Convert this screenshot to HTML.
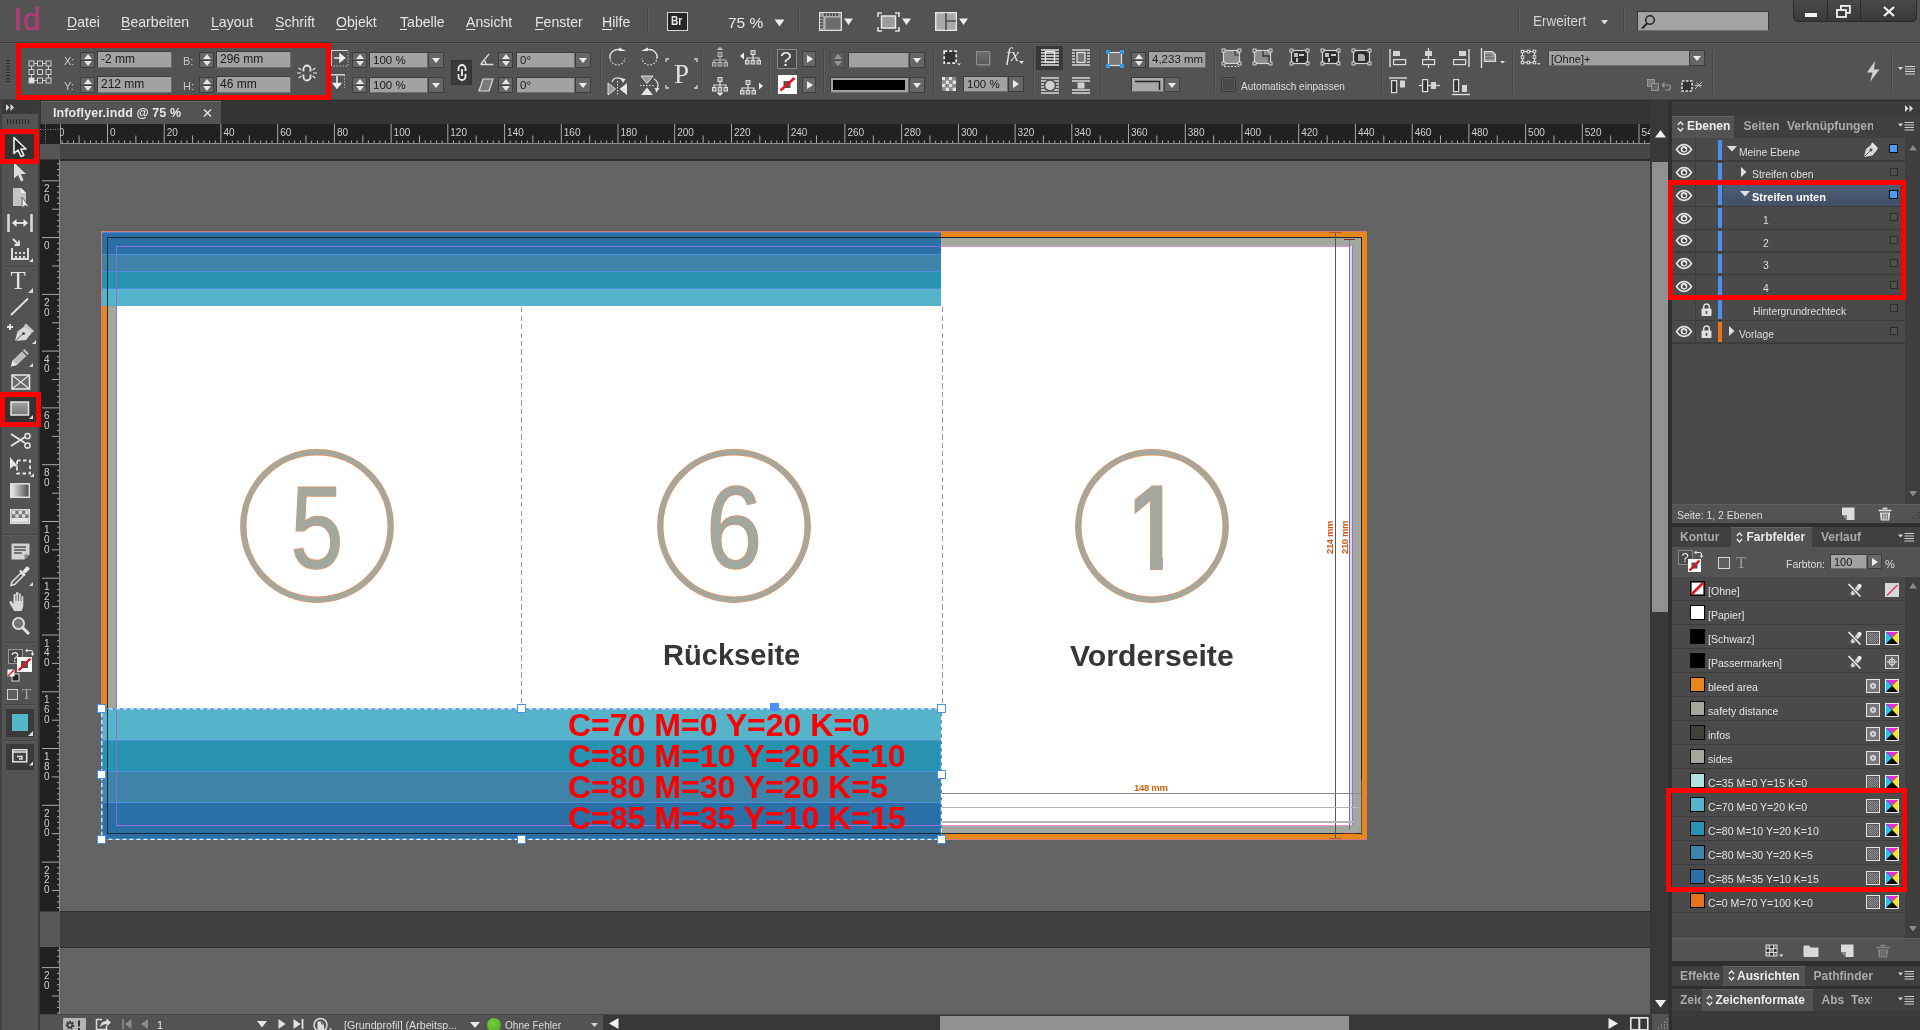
<!DOCTYPE html>
<html lang="de"><head><meta charset="utf-8"><title>Infoflyer.indd @ 75 %</title>
<style>
*{box-sizing:border-box;margin:0;padding:0}
html,body{width:1920px;height:1030px;overflow:hidden;background:#535353}
body{position:relative;will-change:transform;font-family:"Liberation Sans",sans-serif;font-size:11px;color:#dcdcdc}
.a{position:absolute}
.t{position:absolute;white-space:nowrap;line-height:1}
svg{position:absolute;overflow:visible}
.fld{position:absolute;background:#a2a2a2;border:1px solid #3c3c3c;border-right-color:#6a6a6a;border-bottom-color:#6e6e6e;color:#1a1a1a;font-size:12px;line-height:1;white-space:nowrap;overflow:hidden}
.fld span{position:absolute;left:3px;top:1px}
.spin{position:absolute;width:15px;height:16px;background:#666;border:1px solid #3e3e3e}
.spin:before{content:"";position:absolute;left:3px;top:1px;border:4px solid transparent;border-top:0;border-bottom:5px solid #e6e6e6}
.spin:after{content:"";position:absolute;left:3px;bottom:1px;border:4px solid transparent;border-bottom:0;border-top:5px solid #e6e6e6}
.spin i{position:absolute;left:0;right:0;top:6.5px;height:1px;background:#444}
.dd{position:absolute;width:16px;height:16px;background:#666;border:1px solid #3e3e3e}
.dd:after{content:"";position:absolute;left:3px;top:5px;border:4px solid transparent;border-bottom:0;border-top:5px solid #ececec}
.pl{position:absolute;width:14px;height:16px;background:#666;border:1px solid #3e3e3e}
.pl:after{content:"";position:absolute;left:4px;top:3px;border:4px solid transparent;border-right:0;border-left:6px solid #ececec}
.vsep{position:absolute;width:2px;background:linear-gradient(90deg,#474747 50%,#5e5e5e 50%)}
.red{position:absolute;border:5.5px solid #ff0000;z-index:50}
.lbl{position:absolute;font-size:11px;color:#c8c8c8;line-height:1;white-space:nowrap}
</style></head><body>

<div class="a" style="left:0;top:0;width:1920px;height:43px;background:#535353"></div>
<div class="a" style="left:0;top:42px;width:1920px;height:1px;background:#3f3f3f"></div>
<div class="a" style="left:0;top:43px;width:1920px;height:1px;background:#5c5c5c"></div>
<div class="t" style="left:13.5px;top:3px;font-size:32px;color:#a83f75;-webkit-text-stroke:.9px #a83f75;letter-spacing:.5px;transform:scaleX(1);transform-origin:0 0">Id</div>
<div class="t" style="left:67px;top:14px;font-size:15px;color:#e4e4e4;transform:scaleX(.94);transform-origin:0 0"><span style="text-decoration:underline;text-underline-offset:2px">D</span>atei</div>
<div class="t" style="left:121px;top:14px;font-size:15px;color:#e4e4e4;transform:scaleX(.94);transform-origin:0 0"><span style="text-decoration:underline;text-underline-offset:2px">B</span>earbeiten</div>
<div class="t" style="left:211px;top:14px;font-size:15px;color:#e4e4e4;transform:scaleX(.94);transform-origin:0 0"><span style="text-decoration:underline;text-underline-offset:2px">L</span>ayout</div>
<div class="t" style="left:275px;top:14px;font-size:15px;color:#e4e4e4;transform:scaleX(.94);transform-origin:0 0"><span style="text-decoration:underline;text-underline-offset:2px">S</span>chrift</div>
<div class="t" style="left:336px;top:14px;font-size:15px;color:#e4e4e4;transform:scaleX(.94);transform-origin:0 0"><span style="text-decoration:underline;text-underline-offset:2px">O</span>bjekt</div>
<div class="t" style="left:400px;top:14px;font-size:15px;color:#e4e4e4;transform:scaleX(.94);transform-origin:0 0"><span style="text-decoration:underline;text-underline-offset:2px">T</span>abelle</div>
<div class="t" style="left:466px;top:14px;font-size:15px;color:#e4e4e4;transform:scaleX(.94);transform-origin:0 0"><span style="text-decoration:underline;text-underline-offset:2px">A</span>nsicht</div>
<div class="t" style="left:535px;top:14px;font-size:15px;color:#e4e4e4;transform:scaleX(.94);transform-origin:0 0"><span style="text-decoration:underline;text-underline-offset:2px">F</span>enster</div>
<div class="t" style="left:602px;top:14px;font-size:15px;color:#e4e4e4;transform:scaleX(.94);transform-origin:0 0"><span style="text-decoration:underline;text-underline-offset:2px">H</span>ilfe</div>
<div class="vsep" style="left:647px;top:8px;height:26px"></div>
<div class="a" style="left:667px;top:12px;width:21px;height:19px;border:1.5px solid #d8d8d8;background:#262626"></div>
<div class="t" style="left:670.5px;top:15px;font-size:12px;font-weight:bold;color:#e8e8e8;transform:scaleX(.85);transform-origin:0 0">Br</div>
<div class="t" style="left:728px;top:15px;font-size:15.5px;color:#e8e8e8">75 %</div>
<svg style="left:774px;top:19px" width="11" height="8"><path d="M0.5 0.5h10l-5 7z" fill="#eee"/></svg>
<div class="vsep" style="left:798px;top:8px;height:25px"></div>
<svg style="left:819px;top:12px" width="36" height="20"><rect x=".5" y=".5" width="22" height="18" fill="#9a9a9a" stroke="#e2e2e2"/><rect x="6" y="5" width="16" height="13" fill="#6c6c6c" stroke="#cfcfcf" stroke-width=".8"/>
<path d="M6 1v3M9 1v3M12 1v3M15 1v3M18 1v3M1 6h3M1 9h3M1 12h3M1 15h3" stroke="#444" stroke-width="1.6"/><path d="M25 6.5h9l-4.5 6.5z" fill="#eee"/></svg>
<svg style="left:877px;top:12px" width="36" height="20"><path d="M1 5V1h4M18 1h4v4M22 15v4h-4M5 19H1v-4" fill="none" stroke="#e0e0e0" stroke-width="1.6"/><rect x="4.5" y="4" width="14" height="12" fill="#9c9c9c" stroke="#e8e8e8" stroke-width="1.5"/><path d="M25 6.5h9l-4.5 6.5z" fill="#eee"/></svg>
<svg style="left:935px;top:12px" width="36" height="20"><rect x=".7" y=".7" width="20.6" height="17.6" fill="#a8a8a8" stroke="#e4e4e4" stroke-width="1.4"/><path d="M11 1v17M11 9h10" stroke="#4a4a4a" stroke-width="1.6"/><path d="M24 6.5h9l-4.5 6.5z" fill="#eee"/></svg>
<div class="vsep" style="left:1518px;top:8px;height:26px"></div>
<div class="t" style="left:1533px;top:14px;font-size:14.5px;color:#d4d4d4;transform:scaleX(.93);transform-origin:0 0">Erweitert</div>
<svg style="left:1601px;top:20px" width="8" height="5"><path d="M0 0h7l-3.5 4.5z" fill="#ddd"/></svg>
<div class="vsep" style="left:1623px;top:8px;height:25px"></div>
<div class="a" style="left:1637px;top:11px;width:132px;height:20px;background:#a3a3a3;border:1px solid #3a3a3a;border-bottom-color:#707070"></div>
<svg style="left:1641px;top:14px" width="16" height="16"><circle cx="9" cy="6" r="4.3" fill="none" stroke="#222" stroke-width="1.5"/><path d="M6 9.5L1 14.5" stroke="#222" stroke-width="1.8"/></svg>
<div class="a" style="left:1793px;top:0;width:124px;height:22px;background:linear-gradient(#4a4a4a,#383838);border:1px solid #2c2c2c;border-top:0;border-radius:0 0 5px 5px"></div>
<div class="a" style="left:1827px;top:0;width:1px;height:21px;background:#2a2a2a"></div><div class="a" style="left:1860px;top:0;width:1px;height:21px;background:#2a2a2a"></div>
<div class="a" style="left:1805px;top:13px;width:12px;height:4px;background:#f2f2f2"></div>
<svg style="left:1836px;top:5px" width="16" height="14"><rect x="4.9" y=".9" width="9" height="7" fill="none" stroke="#f2f2f2" stroke-width="1.8"/><rect x="1" y="5" width="9" height="7" fill="#3c3c3c" stroke="#f2f2f2" stroke-width="1.8"/></svg>
<svg style="left:1883px;top:6px" width="13" height="11"><path d="M1 1l10 9M11 1L1 10" stroke="#f4f4f4" stroke-width="2.2"/></svg>
<div class="a" style="left:0;top:44px;width:1920px;height:56px;background:#535353"></div>
<div class="a" style="left:0;top:99px;width:1920px;height:1px;background:#464646"></div>
<div class="a" style="left:6px;top:60px;width:4px;height:24px;background:repeating-linear-gradient(#2e2e2e 0 1px,transparent 1px 3px)"></div>
<svg style="left:27.5px;top:59.5px" width="24" height="24"><rect x="1" y="1" width="5" height="5" fill="none" stroke="#cfcfcf" stroke-width="1"/><rect x="9.5" y="1" width="5" height="5" fill="none" stroke="#cfcfcf" stroke-width="1"/><rect x="18" y="1" width="5" height="5" fill="none" stroke="#cfcfcf" stroke-width="1"/><rect x="1" y="9.5" width="5" height="5" fill="none" stroke="#cfcfcf" stroke-width="1"/><rect x="9.5" y="9.5" width="5" height="5" fill="none" stroke="#cfcfcf" stroke-width="1"/><rect x="18" y="9.5" width="5" height="5" fill="none" stroke="#cfcfcf" stroke-width="1"/><rect x="1" y="18" width="5" height="5" fill="#e8e8e8" stroke="#cfcfcf" stroke-width="1"/><rect x="9.5" y="18" width="5" height="5" fill="none" stroke="#cfcfcf" stroke-width="1"/><rect x="18" y="18" width="5" height="5" fill="none" stroke="#cfcfcf" stroke-width="1"/><path d="M6 3.5h3.5M14.5 3.5h3.5M6 20.5h3.5M14.5 20.5h3.5M3.5 6v3.5M3.5 14.5v3.5M20.5 6v3.5M20.5 14.5v3.5" stroke="#cfcfcf"/></svg>
<div class="lbl" style="left:64px;top:56px">X:</div><div class="lbl" style="left:64px;top:81px">Y:</div>
<div class="spin" style="left:80px;top:52px"><i></i></div><div class="spin" style="left:80px;top:77px"><i></i></div>
<div class="fld" style="left:97px;top:51px;width:75px;height:17px"><span>-2 mm</span></div>
<div class="fld" style="left:97px;top:76px;width:75px;height:17px"><span>212 mm</span></div>
<div class="lbl" style="left:183px;top:56px">B:</div><div class="lbl" style="left:183px;top:81px">H:</div>
<div class="spin" style="left:199px;top:52px"><i></i></div><div class="spin" style="left:199px;top:77px"><i></i></div>
<div class="fld" style="left:216px;top:51px;width:75px;height:17px"><span>296 mm</span></div>
<div class="fld" style="left:216px;top:76px;width:75px;height:17px"><span>46 mm</span></div>
<svg style="left:296px;top:63px" width="22" height="20"><path d="M7.5 8.5V6a3.5 3.5 0 0 1 7 0v2.5M7.5 11.5V14a3.5 3.5 0 0 0 7 0v-2.5" fill="none" stroke="#e6e6e6" stroke-width="1.8"/><path d="M1 10h4M17 10h4M2.5 5l3 2M2.5 15l3-2M19.5 5l-3 2M19.5 15l-3-2" stroke="#e6e6e6" stroke-width="1.2"/></svg>
<div class="red" style="left:16px;top:42.5px;width:314.5px;height:57px"></div>
<svg style="left:331px;top:50px" width="18" height="17"><path d="M.5 16V.5H17" fill="none" stroke="#dcdcdc" stroke-width="1.2"/><path d="M17 2v14H1" fill="none" stroke="#bbb" stroke-dasharray="1.5 1.5"/><path d="M3 8h9M9 4.5l4.5 3.5l-4.5 3.5z" stroke="#eee" stroke-width="1.6" fill="#eee"/></svg>
<svg style="left:331px;top:74px" width="16" height="18"><path d="M0 .8h14" stroke="#dcdcdc" stroke-width="1.4"/><path d="M13.5 1v13" stroke="#aaa" stroke-dasharray="1.5 1.5"/><path d="M6 2v9M2.5 9.5l3.5 4.5l3.5-4.5z" stroke="#eee" stroke-width="1.6" fill="#eee"/></svg>
<div class="spin" style="left:352px;top:52px"><i></i></div>
<div class="fld" style="left:369px;top:52px;width:59px;height:16px"><span style="top:2px;font-size:11.5px">100 %</span></div>
<div class="dd" style="left:428px;top:52px"></div>
<div class="spin" style="left:352px;top:77px"><i></i></div>
<div class="fld" style="left:369px;top:77px;width:59px;height:16px"><span style="top:2px;font-size:11.5px">100 %</span></div>
<div class="dd" style="left:428px;top:77px"></div>
<div class="a" style="left:451px;top:60px;width:21px;height:25px;background:#3a3a3a;border:1px solid #333"></div>
<svg style="left:455px;top:63px" width="14" height="20"><path d="M3.5 8V5.5a3.5 3.5 0 0 1 7 0V8M3.5 11v2.5a3.5 3.5 0 0 0 7 0V11M7 6v7" fill="none" stroke="#f0f0f0" stroke-width="1.8"/></svg>
<svg style="left:480px;top:52px" width="14" height="14"><path d="M.5 12.5h13M1 12L9 2M6 12.5a5 5 0 0 0-1.8-4" fill="none" stroke="#ddd" stroke-width="1.3"/></svg>
<svg style="left:479px;top:78px" width="15" height="14"><path d="M4 1h10l-4 12H0z" fill="#7a7a7a" stroke="#ddd" stroke-width="1.2"/></svg>
<div class="spin" style="left:498px;top:52px"><i></i></div>
<div class="fld" style="left:516px;top:52px;width:59px;height:16px"><span style="top:2px;font-size:11.5px">0°</span></div>
<div class="dd" style="left:575px;top:52px"></div>
<div class="spin" style="left:498px;top:77px"><i></i></div>
<div class="fld" style="left:516px;top:77px;width:59px;height:16px"><span style="top:2px;font-size:11.5px">0°</span></div>
<div class="dd" style="left:575px;top:77px"></div>
<div class="vsep" style="left:600px;top:50px;height:43px"></div>
<svg style="left:608px;top:47px" width="20" height="20"><path d="M13 3.5A7.5 7.5 0 0 0 2.2 12" fill="none" stroke="#e0e0e0" stroke-width="1.4"/><path d="M2.5 13a7.5 7.5 0 0 0 14.5-2" fill="none" stroke="#cfcfcf" stroke-width="1.3" stroke-dasharray="1.6 1.6"/><path d="M11 .5l7 3.5h-7z" fill="#e8e8e8"/></svg>
<svg style="left:640px;top:47px" width="20" height="20"><path d="M6 3.5A7.5 7.5 0 0 1 16.8 12" fill="none" stroke="#e0e0e0" stroke-width="1.4"/><path d="M16.5 13a7.5 7.5 0 0 1-14.5-2" fill="none" stroke="#cfcfcf" stroke-width="1.3" stroke-dasharray="1.6 1.6"/><path d="M8 .5L1 4h7z" fill="#e8e8e8"/></svg>
<svg style="left:607px;top:75px" width="22" height="21"><path d="M1 8v12l7.5-6z" fill="#9a9a9a" stroke="#ddd"/><path d="M20 8v12l-7.5-6z" fill="#e4e4e4"/><path d="M10.5 6v14" stroke="#ddd" stroke-dasharray="1.5 1.5"/><path d="M5 7a6 6 0 0 1 11-1" fill="none" stroke="#ddd" stroke-width="1.3"/><path d="M13.5 3l5 1l-2.5 4z" fill="#e4e4e4"/></svg>
<svg style="left:640px;top:75px" width="21" height="21"><path d="M1 1h12l-6 7.5z" fill="#9a9a9a" stroke="#ddd"/><path d="M1 20h12l-6-7.5z" fill="#e4e4e4"/><path d="M0 10.5h14" stroke="#ddd" stroke-dasharray="1.5 1.5"/><path d="M14 4a7 7 0 0 1 3 10" fill="none" stroke="#ddd" stroke-width="1.3"/><path d="M14.5 13l5 0l-3 4.5z" fill="#e4e4e4"/></svg>
<svg style="left:665px;top:58px" width="33" height="31"><path d="M1 4V1h3M29 1h3v3M32 27v3h-3M4 30H1v-3" fill="none" stroke="#d6d6d6" stroke-width="1.3"/></svg>
<div class="t" style="left:674px;top:61px;font-family:'Liberation Serif',serif;font-size:27px;color:#dedede">P</div>
<div class="vsep" style="left:701px;top:50px;height:43px"></div>
<svg style="left:712px;top:47px" width="24" height="20"><path d="M8 0l3.5 3h-7z" fill="#bbb"/><g transform="translate(0,5)" opacity=".7"><path d="M8 4v4M2 11V8h12v3M8 8v3" fill="none" stroke="#ddd" stroke-width="1.2"/><rect x="6" y=".5" width="4" height="4" fill="#888" stroke="#ddd"/><rect x=".5" y="10.5" width="3.5" height="3.5" fill="#888" stroke="#ddd"/><rect x="6.2" y="10.5" width="3.5" height="3.5" fill="#888" stroke="#ddd"/><rect x="12" y="10.5" width="3.5" height="3.5" fill="#888" stroke="#ddd"/></g></svg>
<svg style="left:740px;top:49px" width="24" height="20"><path d="M0 7l4-3.5v7z" fill="#eee"/><g transform="translate(5,1)"><path d="M8 4v4M2 11V8h12v3M8 8v3" fill="none" stroke="#ddd" stroke-width="1.2"/><rect x="6" y=".5" width="4" height="4" fill="#888" stroke="#ddd"/><rect x=".5" y="10.5" width="3.5" height="3.5" fill="#888" stroke="#ddd"/><rect x="6.2" y="10.5" width="3.5" height="3.5" fill="#888" stroke="#ddd"/><rect x="12" y="10.5" width="3.5" height="3.5" fill="#888" stroke="#ddd"/></g></svg>
<svg style="left:712px;top:77px" width="24" height="20"><path d="M8 19l3.5-3.5h-7z" fill="#eee"/><g transform="translate(0,0)"><path d="M8 4v4M2 11V8h12v3M8 8v3" fill="none" stroke="#ddd" stroke-width="1.2"/><rect x="6" y=".5" width="4" height="4" fill="#888" stroke="#ddd"/><rect x=".5" y="10.5" width="3.5" height="3.5" fill="#888" stroke="#ddd"/><rect x="6.2" y="10.5" width="3.5" height="3.5" fill="#888" stroke="#ddd"/><rect x="12" y="10.5" width="3.5" height="3.5" fill="#888" stroke="#ddd"/></g></svg>
<svg style="left:740px;top:76px" width="24" height="20"><path d="M23 10l-4-3.5v7z" fill="#eee"/><g transform="translate(0,4)"><path d="M8 4v4M2 11V8h12v3M8 8v3" fill="none" stroke="#ddd" stroke-width="1.2"/><rect x="6" y=".5" width="4" height="4" fill="#888" stroke="#ddd"/><rect x=".5" y="10.5" width="3.5" height="3.5" fill="#888" stroke="#ddd"/><rect x="6.2" y="10.5" width="3.5" height="3.5" fill="#888" stroke="#ddd"/><rect x="12" y="10.5" width="3.5" height="3.5" fill="#888" stroke="#ddd"/></g></svg>
<div class="vsep" style="left:769px;top:50px;height:43px"></div>
<div class="a" style="left:777px;top:49px;width:20px;height:20px;border:1px solid #888;background:#4a4a4a"></div>
<div class="t" style="left:780px;top:48px;font-size:21px;color:#e8e8e8">?</div>
<svg style="left:777.5px;top:75px" width="19" height="19"><rect width="19" height="19" fill="#fff"/><rect x="5.5" y="6" width="7" height="7" fill="#555"/><path d="M2.5 15.5L16.5 3" stroke="#e8101c" stroke-width="2.4"/></svg>
<div class="pl" style="left:802px;top:51px"></div><div class="pl" style="left:802px;top:77px"></div>
<div class="vsep" style="left:823px;top:50px;height:43px"></div>
<div class="spin" style="left:830px;top:52px;opacity:.45"><i></i></div>
<div class="fld" style="left:848px;top:52px;width:61px;height:16px"></div><div class="dd" style="left:909px;top:52px"></div>
<div class="fld" style="left:830px;top:77px;width:79px;height:16px"><div class="a" style="left:2px;top:2px;right:3px;bottom:2px;background:#000"></div></div><div class="dd" style="left:909px;top:77px"></div>
<div class="vsep" style="left:933px;top:50px;height:43px"></div>
<svg style="left:943px;top:50px" width="18" height="16"><rect x="1.2" y="1.2" width="12" height="12" fill="#333" stroke="#e6e6e6" stroke-width="1.8" stroke-dasharray="3 2"/><path d="M14 13.5h4l-2 2z" fill="#ddd"/></svg>
<div class="a" style="left:976px;top:51px;width:14px;height:14px;background:linear-gradient(#6e6e6e,#585858);border:1.5px solid #8d8d8d;box-shadow:1px 1.5px 0 #6c6c6c"></div>
<div class="t" style="left:1006px;top:46px;font-size:18px;font-style:italic;color:#e0e0e0;font-family:'Liberation Serif',serif">fx</div><svg style="left:1019px;top:61px" width="5" height="3"><path d="M0 0h5l-2.5 3z" fill="#ddd"/></svg>
<svg style="left:942px;top:77px" width="14" height="14"><rect x="0" y="0" width="3.5" height="3.5" fill="#e0e0e0"/><rect x="3.5" y="0" width="3.5" height="3.5" fill="#8a8a8a"/><rect x="7" y="0" width="3.5" height="3.5" fill="#e0e0e0"/><rect x="10.5" y="0" width="3.5" height="3.5" fill="#8a8a8a"/><rect x="0" y="3.5" width="3.5" height="3.5" fill="#8a8a8a"/><rect x="3.5" y="3.5" width="3.5" height="3.5" fill="#e0e0e0"/><rect x="7" y="3.5" width="3.5" height="3.5" fill="#8a8a8a"/><rect x="10.5" y="3.5" width="3.5" height="3.5" fill="#e0e0e0"/><rect x="0" y="7" width="3.5" height="3.5" fill="#e0e0e0"/><rect x="3.5" y="7" width="3.5" height="3.5" fill="#8a8a8a"/><rect x="7" y="7" width="3.5" height="3.5" fill="#e0e0e0"/><rect x="10.5" y="7" width="3.5" height="3.5" fill="#8a8a8a"/><rect x="0" y="10.5" width="3.5" height="3.5" fill="#8a8a8a"/><rect x="3.5" y="10.5" width="3.5" height="3.5" fill="#e0e0e0"/><rect x="7" y="10.5" width="3.5" height="3.5" fill="#8a8a8a"/><rect x="10.5" y="10.5" width="3.5" height="3.5" fill="#e0e0e0"/></svg>
<div class="fld" style="left:963px;top:76px;width:45px;height:16px"><span style="top:2px;font-size:11.5px">100 %</span></div><div class="pl" style="left:1008px;top:76px;width:16px"></div>
<div class="vsep" style="left:1033px;top:50px;height:43px"></div>
<div class="a" style="left:1036px;top:46px;width:27px;height:24px;background:#383838"></div>
<svg style="left:1041px;top:49px" width="18" height="17"><path d="M0 1h18M0 4h18M0 7h18M0 10h18M0 13h18M0 16h18" stroke="#e4e4e4" stroke-width="1.3"/><rect x="4.5" y="2.5" width="9" height="11" fill="none" stroke="#e4e4e4" stroke-width="1.3"/></svg>
<svg style="left:1072px;top:49px" width="18" height="17"><path d="M0 1h18M0 4h3M15 4h3M0 7h3M15 7h3M0 10h3M15 10h3M0 13h3M15 13h3M0 16h18" stroke="#d8d8d8" stroke-width="1.3"/><rect x="5" y="3.5" width="8" height="10" fill="#777" stroke="#e4e4e4" stroke-width="1.3"/></svg>
<svg style="left:1041px;top:77px" width="18" height="17"><path d="M0 1h18M0 4h18M0 7h18M0 10h18M0 13h18M0 16h18" stroke="#d8d8d8" stroke-width="1.3"/><circle cx="9" cy="8.5" r="5.5" fill="#d0d0d0" stroke="#535353" stroke-width="1.5"/></svg>
<svg style="left:1072px;top:77px" width="18" height="17"><path d="M0 1h18M0 4h18M0 13h18M0 16h18" stroke="#d8d8d8" stroke-width="1.3"/><rect x="5.5" y="5.5" width="7" height="6" fill="#d0d0d0"/></svg>
<div class="vsep" style="left:1100px;top:50px;height:43px"></div>
<svg style="left:1106px;top:50px" width="18" height="18"><rect x="2.5" y="2.5" width="13" height="13" fill="#7a7a7a" stroke="#e0e0e0" stroke-width="1.2"/><rect x="0" y="0" width="4" height="4" fill="#2f9be8"/><rect x="14" y="0" width="4" height="4" fill="#2f9be8"/><rect x="0" y="14" width="4" height="4" fill="#2f9be8"/><rect x="14" y="14" width="4" height="4" fill="#2f9be8"/></svg>
<div class="spin" style="left:1131px;top:52px"><i></i></div>
<div class="fld" style="left:1148px;top:51px;width:58px;height:17px"><span style="top:2px;font-size:11.5px">4,233 mm</span></div>
<div class="fld" style="left:1131px;top:77px;width:33px;height:15px;background:#a8a8a8"><svg style="left:3px;top:2px" width="26" height="10"><path d="M0 1.5h24.5V10" fill="none" stroke="#222" stroke-width="1.5"/></svg></div><div class="dd" style="left:1164px;top:77px;height:15px"></div>
<div class="vsep" style="left:1214px;top:50px;height:43px"></div>
<svg style="left:1222px;top:49px" width="21" height="19"><rect x="1.5" y="1.5" width="16" height="13" fill="#8c8c8c" stroke="#d6d6d6" stroke-width="1.2"/><rect x="0" y="0" width="3" height="3" fill="#535353" stroke="#ddd" stroke-width=".9"/><rect x="16" y="0" width="3" height="3" fill="#535353" stroke="#ddd" stroke-width=".9"/><rect x="0" y="13" width="3" height="3" fill="#535353" stroke="#ddd" stroke-width=".9"/><rect x="16" y="13" width="3" height="3" fill="#535353" stroke="#ddd" stroke-width=".9"/><path d="M2 17.5h15" stroke="#ddd" stroke-dasharray="2 1.5"/><path d="M13 2v4h4" fill="none" stroke="#333" stroke-width="1.2"/></svg>
<svg style="left:1253px;top:49px" width="21" height="19"><rect x="1.5" y="1.5" width="16" height="13" fill="#8c8c8c" stroke="#d6d6d6" stroke-width="1.2"/><rect x="0" y="0" width="3" height="3" fill="#535353" stroke="#ddd" stroke-width=".9"/><rect x="16" y="0" width="3" height="3" fill="#535353" stroke="#ddd" stroke-width=".9"/><rect x="0" y="13" width="3" height="3" fill="#535353" stroke="#ddd" stroke-width=".9"/><rect x="16" y="13" width="3" height="3" fill="#535353" stroke="#ddd" stroke-width=".9"/><path d="M10 2v5h6v7" fill="none" stroke="#333" stroke-width="1.3"/></svg>
<svg style="left:1290px;top:49px" width="21" height="19"><rect x="1.5" y="1.5" width="16" height="13" fill="#2c2c2c" stroke="#d6d6d6" stroke-width="1.2"/><rect x="0" y="0" width="3" height="3" fill="#535353" stroke="#ddd" stroke-width=".9"/><rect x="16" y="0" width="3" height="3" fill="#535353" stroke="#ddd" stroke-width=".9"/><rect x="0" y="13" width="3" height="3" fill="#535353" stroke="#ddd" stroke-width=".9"/><rect x="16" y="13" width="3" height="3" fill="#535353" stroke="#ddd" stroke-width=".9"/><rect x="4" y="4" width="4" height="4" fill="#bbb"/><path d="M9 6h5M7 9v4" stroke="#fff" stroke-width="1.4"/></svg>
<svg style="left:1321px;top:49px" width="21" height="19"><rect x="1.5" y="1.5" width="16" height="13" fill="#2c2c2c" stroke="#d6d6d6" stroke-width="1.2"/><rect x="0" y="0" width="3" height="3" fill="#535353" stroke="#ddd" stroke-width=".9"/><rect x="16" y="0" width="3" height="3" fill="#535353" stroke="#ddd" stroke-width=".9"/><rect x="0" y="13" width="3" height="3" fill="#535353" stroke="#ddd" stroke-width=".9"/><rect x="16" y="13" width="3" height="3" fill="#535353" stroke="#ddd" stroke-width=".9"/><rect x="4" y="4" width="4" height="4" fill="#bbb"/><path d="M10 6h5M8 9v4" stroke="#fff" stroke-width="1.4"/></svg>
<svg style="left:1352px;top:49px" width="21" height="19"><rect x="1.5" y="1.5" width="16" height="13" fill="#2c2c2c" stroke="#d6d6d6" stroke-width="1.2"/><rect x="0" y="0" width="3" height="3" fill="#535353" stroke="#ddd" stroke-width=".9"/><rect x="16" y="0" width="3" height="3" fill="#535353" stroke="#ddd" stroke-width=".9"/><rect x="0" y="13" width="3" height="3" fill="#535353" stroke="#ddd" stroke-width=".9"/><rect x="16" y="13" width="3" height="3" fill="#535353" stroke="#ddd" stroke-width=".9"/><path d="M6 5h5l2 2v5H6z" fill="#aaa"/></svg>
<div class="a" style="left:1221px;top:77px;width:15px;height:15px;background:#4a4a4a;border:1px solid #3a3a3a;border-radius:2px;box-shadow:inset 0 0 0 1px #5a5a5a"></div>
<div class="t" style="left:1241px;top:81px;font-size:11.3px;color:#dcdcdc;transform:scaleX(.89);transform-origin:0 0">Automatisch einpassen</div>
<div class="vsep" style="left:1381px;top:50px;height:43px"></div>
<svg style="left:1389px;top:49px" width="18" height="18"><path d="M1 0v18" stroke="#ddd" stroke-width="1.4"/><rect x="4" y="2" width="7" height="5" fill="#d4d4d4"/><rect x="4.6" y="10.6" width="12" height="5" fill="none" stroke="#ddd" stroke-width="1.2"/></svg>
<svg style="left:1421px;top:48px" width="16" height="20"><path d="M7.5 0v20" stroke="#ddd" stroke-width="1.2"/><rect x="4" y="3" width="7" height="5" fill="#d4d4d4"/><rect x="1.6" y="11.6" width="12" height="5" fill="#535353" stroke="#ddd" stroke-width="1.2"/></svg>
<svg style="left:1452px;top:49px" width="18" height="18"><path d="M17 0v18" stroke="#ddd" stroke-width="1.4"/><rect x="7" y="2" width="7" height="5" fill="#d4d4d4"/><rect x="1.6" y="10.6" width="12" height="5" fill="none" stroke="#ddd" stroke-width="1.2"/></svg>
<svg style="left:1480px;top:48px" width="28" height="20"><path d="M1.5 0v20" stroke="#ddd" stroke-width="1.4"/><path d="M4.5 3.5h8l3 3v7h-11z" fill="#9a9a9a" stroke="#ddd" stroke-width="1.2"/><path d="M5 7h7M5 10h9" stroke="#535353" stroke-width="1.2"/><path d="M20 13h5l-2.5 2.5z" fill="#e4e4e4"/></svg>
<svg style="left:1389px;top:77px" width="18" height="18"><path d="M0 1h18" stroke="#ddd" stroke-width="1.4"/><rect x="2.6" y="3.6" width="5" height="12" fill="#333" stroke="#ddd" stroke-width="1.2"/><rect x="11" y="3.5" width="5" height="7" fill="#d4d4d4"/></svg>
<svg style="left:1419px;top:78px" width="21" height="16"><path d="M0 7.5h21" stroke="#ddd" stroke-width="1.2"/><rect x="3.6" y="1.6" width="5" height="12" fill="#333" stroke="#ddd" stroke-width="1.2"/><rect x="12" y="4" width="5" height="7" fill="#d4d4d4"/></svg>
<svg style="left:1452px;top:77px" width="18" height="19"><path d="M0 17.5h18" stroke="#ddd" stroke-width="1.4"/><rect x="1.6" y="2.6" width="5" height="12" fill="#333" stroke="#ddd" stroke-width="1.2"/><rect x="10" y="8" width="5" height="7" fill="#d4d4d4"/></svg>
<div class="vsep" style="left:1512px;top:50px;height:43px"></div>
<svg style="left:1521px;top:50px" width="20" height="16"><rect x="0.19999999999999996" y="0.19999999999999996" width="2.6" height="2.6" fill="none" stroke="#e4e4e4" stroke-width=".9"/><rect x="6.2" y="0.19999999999999996" width="2.6" height="2.6" fill="none" stroke="#e4e4e4" stroke-width=".9"/><rect x="12.2" y="0.19999999999999996" width="2.6" height="2.6" fill="none" stroke="#e4e4e4" stroke-width=".9"/><rect x="0.19999999999999996" y="5.7" width="2.6" height="2.6" fill="none" stroke="#e4e4e4" stroke-width=".9"/><rect x="12.2" y="5.7" width="2.6" height="2.6" fill="none" stroke="#e4e4e4" stroke-width=".9"/><rect x="0.19999999999999996" y="11.2" width="2.6" height="2.6" fill="none" stroke="#e4e4e4" stroke-width=".9"/><rect x="6.2" y="11.2" width="2.6" height="2.6" fill="none" stroke="#e4e4e4" stroke-width=".9"/><rect x="12.2" y="11.2" width="2.6" height="2.6" fill="none" stroke="#e4e4e4" stroke-width=".9"/><path d="M3 1.5h3M9 1.5h3M3 12.5h3M9 12.5h3M1.5 3v2.5M1.5 8.5V11M13.5 3v2.5M13.5 8.5V11" stroke="#e4e4e4" stroke-width=".9"/><path d="M16 13h3.5l-1.7 2z" fill="#ddd"/></svg>
<div class="fld" style="left:1548px;top:50px;width:142px;height:16px;border-color:#4a4a4a #a2a2a2 #707070 #4a4a4a"><span style="top:2.5px;font-size:11px;left:2px">[Ohne]+</span></div><div class="dd" style="left:1689px;top:50px"></div>
<div class="vsep" style="left:1712px;top:50px;height:43px"></div>
<svg style="left:1647px;top:79px" width="26" height="14" opacity=".55"><rect x=".5" y=".5" width="7" height="7" fill="#999" stroke="#ccc"/><rect x="4.5" y="4.5" width="7" height="7" fill="#777" stroke="#ccc"/><path d="M15 6h6a2.5 2.5 0 0 1 0 5h-3M17.5 3.5L15 6l2.5 2.5" fill="none" stroke="#ccc" stroke-width="1.2"/></svg>
<svg style="left:1681px;top:80px" width="24" height="13"><rect x="1" y="1" width="10" height="10" fill="#333" stroke="#e0e0e0" stroke-width="1.6" stroke-dasharray="2.5 1.5"/><path d="M14 9l7-7M15.5 2.5l4 5M14 5.5h7" stroke="#bbb" stroke-width="1"/></svg>
<svg style="left:1866px;top:61px" width="15" height="22"><path d="M9 0L1 11.5h5.5L4 21l9.5-12.5H8z" fill="#cfcfcf"/></svg>
<div class="vsep" style="left:1891px;top:50px;height:43px"></div>
<svg style="left:1898px;top:66px" width="18" height="9"><path d="M0 1h5l-2.5 3z" fill="#ddd"/><path d="M7 .5h10M7 3h10M7 5.5h10M7 8h10" stroke="#d8d8d8" stroke-width="1.1"/></svg>
<div class="a" style="left:0;top:100px;width:1672px;height:24px;background:#353535"></div>
<div class="a" style="left:0;top:100px;width:1672px;height:1px;background:#2e2e2e"></div>
<div class="a" style="left:41px;top:101px;width:181px;height:23px;background:#535353;border-top:1px solid #676767;border-right:1px solid #303030"></div>
<div class="t" style="left:53px;top:106.5px;font-size:12.5px;font-weight:bold;color:#e6e6e6;letter-spacing:.1px">Infoflyer.indd @ 75 %</div>
<svg style="left:203px;top:109px" width="9" height="8"><path d="M1 .5l7 7M8 .5l-7 7" stroke="#e0e0e0" stroke-width="1.5"/></svg>
<div class="a" style="left:0;top:100px;width:40px;height:930px;background:#535353"></div>
<div class="a" style="left:0;top:100px;width:40px;height:14px;background:#3a3a3a"></div>
<div class="a" style="left:38px;top:100px;width:2px;height:930px;background:#3c3c3c"></div>
<div class="a" style="left:0;top:100px;width:2px;height:930px;background:#424242"></div>
<svg style="left:6px;top:104px" width="9" height="7"><path d="M0 0l3.5 3.5L0 7zM4.5 0L8 3.5L4.5 7z" fill="#dcdcdc"/></svg>
<div class="a" style="left:7px;top:119px;width:24px;height:5px;background:repeating-linear-gradient(90deg,#2c2c2c 0 1px,transparent 1px 3px)"></div>
<div class="a" style="left:4px;top:134px;width:31px;height:25px;background:#333"></div>
<div class="a" style="left:4px;top:396px;width:32px;height:26px;background:#333"></div>
<svg style="left:12px;top:136px" width="16" height="22"><path d="M2 1.5v16l4-3.5l3 6.5l2.8-1.3L8.8 13H14z" fill="#2a2a2a" stroke="#f0f0f0" stroke-width="1.6" stroke-linejoin="round"/></svg>
<svg style="left:13px;top:162px" width="15" height="21"><path d="M1 .5v16l4-3.5l3 6.5l2.6-1.2L7.8 12H13z" fill="#dcdcdc"/></svg>
<svg style="left:12px;top:187px" width="18" height="22"><path d="M1 1h8l5 5v13H1z" fill="#c4c4c4"/><path d="M9 1v5h5z" fill="#eee"/><path d="M10 10v11l3-2.5l4 1.5z" fill="#e8e8e8" stroke="#535353" stroke-width=".8"/></svg>
<svg style="left:7px;top:214px" width="26" height="18"><path d="M1.5 0v18M24.5 0v18" stroke="#d8d8d8" stroke-width="2.6"/><path d="M7 9h12" stroke="#e8e8e8" stroke-width="1.8"/><path d="M9.5 5L5 9l4.5 4zM16.5 5L21 9l-4.5 4z" fill="#e8e8e8"/></svg>
<svg style="left:10px;top:238px" width="24" height="25"><path d="M3 1l6 6M9 2.5V7H4.5" fill="none" stroke="#e4e4e4" stroke-width="1.8"/><path d="M2 10v11h16V10" fill="none" stroke="#dcdcdc" stroke-width="2"/><path d="M5 14h2v2H5zM9 14h2v2H9zM13 14h2v2h-2zM5 18h2v2H5zM9 18h2v2H9zM13 18h2v2h-2z" fill="#dcdcdc"/><path d="M23 20v4h-4z" fill="#dcdcdc"/></svg>
<div class="a" style="left:4px;top:266px;width:32px;height:1px;background:#444"></div><div class="a" style="left:4px;top:267px;width:32px;height:1px;background:#5d5d5d"></div>
<div class="t" style="left:10.5px;top:268px;font-family:'Liberation Serif',serif;font-size:25px;color:#e2e2e2">T</div><svg style="left:28px;top:288px" width="5" height="5"><path d="M5 0v5H0z" fill="#dcdcdc"/></svg>
<svg style="left:10px;top:297px" width="20" height="20"><path d="M1 18L18 1.5" stroke="#e4e4e4" stroke-width="1.8"/></svg>
<svg style="left:6px;top:321px" width="30" height="24"><path d="M1 6h6M4 3v6" stroke="#e8e8e8" stroke-width="1.8"/><path d="M9 20l2.5-9.5L19 5l7 6.5l-6 7.5z" fill="#d8d8d8"/><path d="M20 2.5l8 7.5-2 2-8-7.5z" fill="#c8c8c8"/><circle cx="17.5" cy="12.5" r="1.6" fill="#535353"/><path d="M9.5 20l7-7" stroke="#535353" stroke-width="1"/><path d="M33 19v4h-4z" fill="#dcdcdc" transform="translate(-3,0)"/></svg>
<svg style="left:9px;top:347px" width="26" height="22"><path d="M2 19.5l1.5-6L15.5 2l4.5 4.5L8 18z" fill="#bdbdbd"/><path d="M2 19.5l1.5-6l4.5 4.5z" fill="#e8e8e8"/><path d="M13.5 4l4.5 4.5" stroke="#535353" stroke-width="1.2"/><path d="M24 16v4h-4z" fill="#dcdcdc"/></svg>
<svg style="left:10.5px;top:374px" width="20" height="17"><rect x="1" y="1" width="17.5" height="14" fill="#6a6a6a" stroke="#e2e2e2" stroke-width="1.6"/><path d="M1 1l17.5 14M18.5 1L1 15" stroke="#e2e2e2" stroke-width="1.2"/></svg>
<svg style="left:10px;top:401px" width="24" height="20"><defs><linearGradient id="rg" x1="0" y1="0" x2="0" y2="1"><stop offset="0" stop-color="#a4a4a4"/><stop offset="1" stop-color="#757575"/></linearGradient></defs><rect x="1" y="1" width="17.5" height="13" fill="url(#rg)" stroke="#e6e6e6" stroke-width="1.5"/><path d="M23 14v4h-4z" fill="#e4e4e4"/></svg>
<svg style="left:10px;top:432px" width="22" height="18"><path d="M1 2l14 9M1 14L15 5" stroke="#e6e6e6" stroke-width="1.8"/><circle cx="17.5" cy="4" r="2.6" fill="none" stroke="#e6e6e6" stroke-width="1.5"/><circle cx="17.5" cy="13.5" r="2.6" fill="none" stroke="#e6e6e6" stroke-width="1.5"/></svg>
<svg style="left:9px;top:456px" width="26" height="22"><path d="M1 1v12l3.5-3l5 1z" fill="#e6e6e6"/><rect x="8" y="4.5" width="13" height="13" fill="none" stroke="#e6e6e6" stroke-width="1.8" stroke-dasharray="3.5 2.5"/><path d="M25 17v4h-4z" fill="#dcdcdc"/></svg>
<svg style="left:10px;top:483px" width="21" height="16"><defs><linearGradient id="gg" x1="0" y1="0" x2="1" y2="0"><stop offset="0" stop-color="#f0f0f0"/><stop offset="1" stop-color="#4a4a4a"/></linearGradient></defs><rect x=".8" y=".8" width="18.5" height="13.5" fill="url(#gg)" stroke="#e0e0e0" stroke-width="1.5"/></svg>
<svg style="left:10px;top:509px" width="21" height="16"><rect x=".8" y=".8" width="18.5" height="13.5" fill="#777" stroke="#e0e0e0" stroke-width="1.5"/><rect x="2" y="2" width="3.3" height="3.3" fill="#ddd"/><rect x="8.6" y="2" width="3.3" height="3.3" fill="#ddd"/><rect x="15.2" y="2" width="3.3" height="3.3" fill="#ddd"/><rect x="5.3" y="5.3" width="3.3" height="3.3" fill="#ddd"/><rect x="11.899999999999999" y="5.3" width="3.3" height="3.3" fill="#ddd"/><rect x="1.5" y="9" width="17" height="4.5" fill="#e4e4e4"/></svg>
<div class="a" style="left:4px;top:534px;width:32px;height:1px;background:#444"></div><div class="a" style="left:4px;top:535px;width:32px;height:1px;background:#5d5d5d"></div>
<svg style="left:11px;top:543px" width="20" height="18"><path d="M.5.5h18v11l-5 5H.5z" fill="#d2d2d2"/><path d="M13.5 16.5v-5h5z" fill="#8a8a8a"/><path d="M3 4h12M3 7h12M3 10h8" stroke="#535353" stroke-width="1.3"/></svg>
<svg style="left:9px;top:566px" width="25" height="22"><path d="M2 19.5l1-3.5l9-9l2.5 2.5l-9 9z" fill="none" stroke="#e0e0e0" stroke-width="1.5"/><path d="M11 4.5l5 5" stroke="#e8e8e8" stroke-width="2.2"/><path d="M13.5 5.5l3-4a2 2 0 0 1 3.5 2.5l-4 3.5z" fill="#e8e8e8"/><path d="M24 16v4h-4z" fill="#dcdcdc"/></svg>
<svg style="left:9px;top:590px" width="22" height="22"><path d="M5 21c-1-3-4-6-4.5-8.5c0-1.5 1.5-2 2.5-.5l1.5 2V5c0-1.5 2.5-1.5 2.5 0V3c0-1.5 2.5-1.5 2.5 0v1.5c0-1.5 2.5-1.5 2.5 0V7c0-1.3 2.3-1.3 2.3 0v8c0 2.5-1 4-1.5 6z" fill="#d8d8d8"/><path d="M7 5v6M9.5 4v7M12 5v6" stroke="#535353" stroke-width=".8"/></svg>
<svg style="left:11px;top:616px" width="20" height="20"><circle cx="7.5" cy="7.5" r="5.6" fill="#777" stroke="#e2e2e2" stroke-width="1.8"/><path d="M11.5 11.5l6.5 6.5" stroke="#e2e2e2" stroke-width="3"/></svg>
<div class="a" style="left:4px;top:642px;width:32px;height:1px;background:#444"></div><div class="a" style="left:4px;top:643px;width:32px;height:1px;background:#5d5d5d"></div>
<div class="a" style="left:8px;top:649px;width:15px;height:15px;border:1px solid #999;background:#4a4a4a"></div><div class="t" style="left:11px;top:650px;font-size:14px;color:#e0e0e0">?</div>
<svg style="left:17px;top:657px" width="15" height="15"><rect width="15" height="15" fill="#fff"/><rect x="4" y="4" width="7" height="7" fill="#535353"/><path d="M1.5 13.5L13.5 1.5" stroke="#e8101c" stroke-width="2.4"/></svg>
<svg style="left:25px;top:647px" width="9" height="9"><path d="M1 3.5h4.5a2 2 0 0 1 2 2V8" fill="none" stroke="#e0e0e0" stroke-width="1.1"/><path d="M2.5 1.5L0 3.5L2.5 5.5zM5.5 6.5l2 2.5l2-2.5z" fill="#e0e0e0"/></svg>
<svg style="left:7px;top:669px" width="14" height="14"><rect x="5" y="5" width="7" height="7" fill="#222" stroke="#ddd"/><rect x=".5" y=".5" width="7" height="7" fill="#fff"/><path d="M1 7L7 1" stroke="#e8101c" stroke-width="1.4"/></svg>
<div class="a" style="left:7px;top:689px;width:11px;height:11px;border:1.5px solid #d0d0d0;background:#5e5e5e"></div>
<div class="t" style="left:22px;top:687px;font-family:'Liberation Serif',serif;font-size:15px;color:#a8a8a8">T</div>
<div class="a" style="left:4px;top:704px;width:32px;height:1px;background:#444"></div><div class="a" style="left:4px;top:705px;width:32px;height:1px;background:#5d5d5d"></div>
<div class="a" style="left:6px;top:709px;width:28px;height:28px;background:#3a3a3a"></div>
<div class="a" style="left:11.5px;top:714px;width:16px;height:17px;background:#55b6ca"></div><svg style="left:28px;top:731px" width="5" height="5"><path d="M5 0v5H0z" fill="#dcdcdc"/></svg>
<div class="a" style="left:4px;top:740px;width:32px;height:1px;background:#444"></div><div class="a" style="left:4px;top:741px;width:32px;height:1px;background:#5d5d5d"></div>
<div class="a" style="left:6px;top:744px;width:28px;height:26px;background:#3a3a3a"></div>
<svg style="left:12px;top:749px" width="22" height="18"><rect x=".8" y=".8" width="14" height="12" fill="#444" stroke="#e4e4e4" stroke-width="1.5"/><path d="M1 3h14" stroke="#e4e4e4" stroke-width="1.5"/><path d="M5 7.5h5v2.5h-3" fill="none" stroke="#e4e4e4" stroke-width="1.3"/><path d="M21 12.5v4h-4z" fill="#dcdcdc"/></svg>
<div class="red" style="left:0;top:129px;width:38.5px;height:34.5px;border-width:5px"></div>
<div class="red" style="left:0;top:392px;width:40.5px;height:35px;border-width:5px"></div>
<div class="a" id="cv" style="left:60px;top:144px;width:1590px;height:870px;overflow:hidden;background:#636363">
<div class="a" style="left:0px;top:0px;width:1590px;height:15.5px;background:#454545;"></div>
<div class="a" style="left:0px;top:15.4px;width:1590px;height:1.4px;background:#2c2c2c;"></div>
<div class="a" style="left:0px;top:767.5px;width:1590px;height:36px;background:#414141;"></div>
<div class="a" style="left:0px;top:766.8px;width:1590px;height:1.2px;background:#2e2e2e;"></div>
<div class="a" style="left:0px;top:802.8px;width:1590px;height:1.2px;background:#2e2e2e;"></div>
<div class="a" style="left:41.13px;top:87.23px;width:1266.34px;height:608.85px;background:#cf7f78;"></div>
<div class="a" style="left:41.83px;top:87.93px;width:1264.94px;height:607.45px;background:#e8861e;"></div>
<div class="a" style="left:47.5px;top:93.6px;width:1253.6px;height:596.11px;background:#a3a89e;"></div>
<div class="a" style="left:56.1px;top:102.2px;width:1236.4px;height:578.91px;background:#ffffff;"></div>
<div class="a" style="left:41.83px;top:87.92px;width:839.52px;height:23.01px;background:#2a6fa6;"></div>
<div class="a" style="left:41.83px;top:110.63px;width:839.52px;height:17.33px;background:#3d84a8;"></div>
<div class="a" style="left:41.83px;top:127.66px;width:839.52px;height:17.33px;background:#2793b0;"></div>
<div class="a" style="left:41.83px;top:144.69px;width:839.52px;height:17.33px;background:#55b4c9;"></div>
<div class="a" style="left:41.83px;top:564.81px;width:839.52px;height:31.52px;background:#55b4c9;"></div>
<div class="a" style="left:41.83px;top:596.03px;width:839.52px;height:31.52px;background:#2793b0;"></div>
<div class="a" style="left:41.83px;top:627.26px;width:839.52px;height:31.52px;background:#3d84a8;"></div>
<div class="a" style="left:41.83px;top:658.48px;width:839.52px;height:37.2px;background:#2a6fa6;"></div>
<div class="a" style="left:41.83px;top:110.13px;width:839.52px;height:1px;background:#4c8fe0;"></div>
<div class="a" style="left:41.83px;top:127.16px;width:839.52px;height:1px;background:#4c8fe0;"></div>
<div class="a" style="left:41.83px;top:144.19px;width:839.52px;height:1px;background:#4c8fe0;"></div>
<div class="a" style="left:41.83px;top:595.53px;width:839.52px;height:1px;background:#4c8fe0;"></div>
<div class="a" style="left:41.83px;top:626.76px;width:839.52px;height:1px;background:#4c8fe0;"></div>
<div class="a" style="left:41.83px;top:657.98px;width:839.52px;height:1px;background:#4c8fe0;"></div>
<div class="a" style="left:41.83px;top:87.92px;width:839.52px;height:1px;background:#4c84d0;"></div>
<div class="a" style="left:46.9px;top:93px;width:1254.8px;height:597.31px;border:1.2px solid #1c2a33"></div>
<div class="a" style="left:55.6px;top:101.7px;width:1237.4px;height:579.91px;border:1px solid #a070d0;border-top-color:#e08ae4;border-bottom-color:#ee8ef0"></div>
<div class="a" style="left:55.6px;top:101.7px;width:825.74px;height:1px;background:#8070e0;"></div>
<div class="a" style="left:55.6px;top:680.61px;width:825.74px;height:1px;background:#9a6fe0;"></div>
<div class="a" style="left:55.6px;top:101.7px;width:1px;height:59.53px;background:#8070e0;"></div>
<div class="a" style="left:55.6px;top:564.81px;width:1px;height:116.3px;background:#8070e0;"></div>
<div class="a" style="left:1290px;top:102.2px;width:1.5px;height:578.91px;background:#dcd4f2;"></div>
<div class="a" style="left:461.39px;top:162.73px;width:1px;height:402.08px;background:repeating-linear-gradient(#999 0 5px,transparent 5px 8.5px)"></div>
<div class="a" style="left:881.54px;top:162.73px;width:1px;height:402.08px;background:repeating-linear-gradient(#999 0 5px,transparent 5px 8.5px)"></div>
<div class="a" style="left:1275.2px;top:88px;width:1px;height:606px;background:#555;"></div>
<div class="a" style="left:1289.3px;top:96px;width:1px;height:590px;background:#777;"></div>
<div class="a" style="left:1269px;top:87.5px;width:13px;height:1px;background:#c05a20;"></div>
<div class="a" style="left:1269px;top:694px;width:13px;height:1px;background:#c05a20;"></div>
<div class="a" style="left:1284px;top:94.5px;width:11px;height:1.2px;background:#8a2c10;"></div>
<div class="a" style="left:1284px;top:688.5px;width:11px;height:1.2px;background:#8a2c10;"></div>
<div class="a" style="left:881.5px;top:649.1px;width:420px;height:1px;background:#858585;"></div>
<div class="a" style="left:881.5px;top:663.2px;width:420px;height:1.3px;background:#b4b4b4;"></div>
<div class="a" style="left:881.5px;top:677.3px;width:411px;height:1.3px;background:#b4b4b4;"></div>
<div class="a" style="left:1301px;top:636px;width:1px;height:55px;background:#665040;"></div>
<div class="t" style="left:1134px;top:783px;font-size:9.5px;font-weight:bold;color:#d2600f;left:1074px;top:639.2px;letter-spacing:-.3px">148 mm</div>
<div class="t" style="left:1264.5px;top:409.5px;font-size:9.5px;font-weight:bold;color:#d2560f;transform:rotate(-90deg);transform-origin:0 0;letter-spacing:-.4px">214 mm</div>
<div class="t" style="left:1279.5px;top:409.5px;font-size:9.5px;font-weight:bold;color:#d2560f;transform:rotate(-90deg);transform-origin:0 0;letter-spacing:-.4px">210 mm</div>
<svg style="left:176.5px;top:302.29999999999995px" width="160" height="160"><circle cx="80" cy="80" r="73.7" fill="none" stroke="#dc9468" stroke-width="6.4"/><circle cx="80" cy="80" r="73.7" fill="none" stroke="#a3a89e" stroke-width="4.6"/><text x="80" y="122" text-anchor="middle" font-family="Liberation Sans, sans-serif" font-size="116" fill="#a3a89e" stroke="#dc9468" stroke-width="1.5" paint-order="stroke" transform="translate(80 0) scale(0.82 1) translate(-80 0)">5</text></svg>
<svg style="left:594px;top:302.29999999999995px" width="160" height="160"><circle cx="80" cy="80" r="73.7" fill="none" stroke="#dc9468" stroke-width="6.4"/><circle cx="80" cy="80" r="73.7" fill="none" stroke="#a3a89e" stroke-width="4.6"/><text x="80" y="122" text-anchor="middle" font-family="Liberation Sans, sans-serif" font-size="116" fill="#a3a89e" stroke="#dc9468" stroke-width="1.5" paint-order="stroke" transform="translate(80 0) scale(0.87 1) translate(-80 0)">6</text></svg>
<svg style="left:1012px;top:302.29999999999995px" width="160" height="160"><defs><clipPath id="c1"><path d="M0 0H160V110H90.7V130H78V110H0Z"/></clipPath></defs><circle cx="80" cy="80" r="73.7" fill="none" stroke="#dc9468" stroke-width="6.4"/><circle cx="80" cy="80" r="73.7" fill="none" stroke="#a3a89e" stroke-width="4.6"/><g clip-path="url(#c1)"><text x="83" y="121.8" text-anchor="middle" font-family="Liberation Sans, sans-serif" font-size="116" transform="translate(80 0) scale(.86 1) translate(-80 0)" fill="#dc9468" stroke="#dc9468" stroke-width="4">1</text><text x="83" y="121.8" text-anchor="middle" font-family="Liberation Sans, sans-serif" font-size="116" transform="translate(80 0) scale(.86 1) translate(-80 0)" fill="#a3a89e" stroke="#a3a89e" stroke-width="2.5">1</text></g></svg>
<div class="t" id="rs" style="left:603.3px;top:496.4px;font-size:29.5px;font-weight:bold;color:#363636;transform-origin:0 0;transform:scaleX(.985)">Rückseite</div>
<div class="t" id="vs" style="left:1009.5px;top:496.6px;font-size:29.5px;font-weight:bold;color:#363636;transform-origin:0 0;transform:scaleX(1.022)">Vorderseite</div>
<div class="t rl" id="rl0" style="left:508px;top:566.2px;font-size:31.5px;font-weight:bold;color:#ff0000;transform-origin:0 0;transform:scaleX(1.016)">C=70 M=0 Y=20 K=0</div>
<div class="t rl" id="rl1" style="left:508px;top:597.1px;font-size:31.5px;font-weight:bold;color:#ff0000;transform-origin:0 0;transform:scaleX(1.016)">C=80 M=10 Y=20 K=10</div>
<div class="t rl" id="rl2" style="left:508px;top:628px;font-size:31.5px;font-weight:bold;color:#ff0000;transform-origin:0 0;transform:scaleX(1.016)">C=80 M=30 Y=20 K=5</div>
<div class="t rl" id="rl3" style="left:508px;top:658.9px;font-size:31.5px;font-weight:bold;color:#ff0000;transform-origin:0 0;transform:scaleX(1.016)">C=85 M=35 Y=10 K=15</div>
<svg style="left:0;top:0" width="1590" height="870"><rect x="41.83" y="564.81" width="839.52" height="130.58" fill="none" stroke="#3f8ad8" stroke-width="1.2"/><rect x="41.83" y="564.81" width="839.52" height="130.58" fill="none" stroke="#eef4fb" stroke-width="1.2" stroke-dasharray="4 3"/></svg>
<div class="a" style="left:37.33px;top:560.31px;width:9px;height:9px;background:#fff;border:1px solid #4a90e8"></div>
<div class="a" style="left:457.09px;top:560.31px;width:9px;height:9px;background:#fff;border:1px solid #4a90e8"></div>
<div class="a" style="left:876.84px;top:560.31px;width:9px;height:9px;background:#fff;border:1px solid #4a90e8"></div>
<div class="a" style="left:37.33px;top:625.6px;width:9px;height:9px;background:#fff;border:1px solid #4a90e8"></div>
<div class="a" style="left:876.84px;top:625.6px;width:9px;height:9px;background:#fff;border:1px solid #4a90e8"></div>
<div class="a" style="left:37.33px;top:690.88px;width:9px;height:9px;background:#fff;border:1px solid #4a90e8"></div>
<div class="a" style="left:457.09px;top:690.88px;width:9px;height:9px;background:#fff;border:1px solid #4a90e8"></div>
<div class="a" style="left:876.84px;top:690.88px;width:9px;height:9px;background:#fff;border:1px solid #4a90e8"></div>
<div class="a" style="left:709.5px;top:558.81px;width:9px;height:8px;background:#4a90ff"></div>
</div>
<div class="a" style="left:40px;top:124px;width:1612px;height:20px;background:#212121"></div>
<div class="a" style="left:40px;top:144px;width:20px;height:870px;background:#212121"></div>
<div class="a" style="left:60px;top:124px;width:1592px;height:20px;overflow:hidden"><svg style="left:0;top:0" width="1592" height="20" viewBox="60 124 1592 20"><g stroke="#a8a8a8" stroke-width="1"><path d="M62.1 140.5v3"/><path d="M67.8 140.5v3"/><path d="M73.5 140.5v3"/><path d="M79.1 135.5v8"/><path d="M84.8 140.5v3"/><path d="M90.5 140.5v3"/><path d="M96.2 140.5v3"/><path d="M101.8 140.5v3"/><path d="M107.5 124v19"/><path d="M113.2 140.5v3"/><path d="M118.8 140.5v3"/><path d="M124.5 140.5v3"/><path d="M130.2 140.5v3"/><path d="M135.9 135.5v8"/><path d="M141.5 140.5v3"/><path d="M147.2 140.5v3"/><path d="M152.9 140.5v3"/><path d="M158.6 140.5v3"/><path d="M164.2 124v19"/><path d="M169.9 140.5v3"/><path d="M175.6 140.5v3"/><path d="M181.2 140.5v3"/><path d="M186.9 140.5v3"/><path d="M192.6 135.5v8"/><path d="M198.3 140.5v3"/><path d="M203.9 140.5v3"/><path d="M209.6 140.5v3"/><path d="M215.3 140.5v3"/><path d="M220.9 124v19"/><path d="M226.6 140.5v3"/><path d="M232.3 140.5v3"/><path d="M238 140.5v3"/><path d="M243.6 140.5v3"/><path d="M249.3 135.5v8"/><path d="M255 140.5v3"/><path d="M260.7 140.5v3"/><path d="M266.3 140.5v3"/><path d="M272 140.5v3"/><path d="M277.7 124v19"/><path d="M283.3 140.5v3"/><path d="M289 140.5v3"/><path d="M294.7 140.5v3"/><path d="M300.4 140.5v3"/><path d="M306 135.5v8"/><path d="M311.7 140.5v3"/><path d="M317.4 140.5v3"/><path d="M323.1 140.5v3"/><path d="M328.7 140.5v3"/><path d="M334.4 124v19"/><path d="M340.1 140.5v3"/><path d="M345.7 140.5v3"/><path d="M351.4 140.5v3"/><path d="M357.1 140.5v3"/><path d="M362.8 135.5v8"/><path d="M368.4 140.5v3"/><path d="M374.1 140.5v3"/><path d="M379.8 140.5v3"/><path d="M385.4 140.5v3"/><path d="M391.1 124v19"/><path d="M396.8 140.5v3"/><path d="M402.5 140.5v3"/><path d="M408.1 140.5v3"/><path d="M413.8 140.5v3"/><path d="M419.5 135.5v8"/><path d="M425.2 140.5v3"/><path d="M430.8 140.5v3"/><path d="M436.5 140.5v3"/><path d="M442.2 140.5v3"/><path d="M447.8 124v19"/><path d="M453.5 140.5v3"/><path d="M459.2 140.5v3"/><path d="M464.9 140.5v3"/><path d="M470.5 140.5v3"/><path d="M476.2 135.5v8"/><path d="M481.9 140.5v3"/><path d="M487.6 140.5v3"/><path d="M493.2 140.5v3"/><path d="M498.9 140.5v3"/><path d="M504.6 124v19"/><path d="M510.2 140.5v3"/><path d="M515.9 140.5v3"/><path d="M521.6 140.5v3"/><path d="M527.3 140.5v3"/><path d="M532.9 135.5v8"/><path d="M538.6 140.5v3"/><path d="M544.3 140.5v3"/><path d="M549.9 140.5v3"/><path d="M555.6 140.5v3"/><path d="M561.3 124v19"/><path d="M567 140.5v3"/><path d="M572.6 140.5v3"/><path d="M578.3 140.5v3"/><path d="M584 140.5v3"/><path d="M589.7 135.5v8"/><path d="M595.3 140.5v3"/><path d="M601 140.5v3"/><path d="M606.7 140.5v3"/><path d="M612.3 140.5v3"/><path d="M618 124v19"/><path d="M623.7 140.5v3"/><path d="M629.4 140.5v3"/><path d="M635 140.5v3"/><path d="M640.7 140.5v3"/><path d="M646.4 135.5v8"/><path d="M652.1 140.5v3"/><path d="M657.7 140.5v3"/><path d="M663.4 140.5v3"/><path d="M669.1 140.5v3"/><path d="M674.7 124v19"/><path d="M680.4 140.5v3"/><path d="M686.1 140.5v3"/><path d="M691.8 140.5v3"/><path d="M697.4 140.5v3"/><path d="M703.1 135.5v8"/><path d="M708.8 140.5v3"/><path d="M714.4 140.5v3"/><path d="M720.1 140.5v3"/><path d="M725.8 140.5v3"/><path d="M731.5 124v19"/><path d="M737.1 140.5v3"/><path d="M742.8 140.5v3"/><path d="M748.5 140.5v3"/><path d="M754.2 140.5v3"/><path d="M759.8 135.5v8"/><path d="M765.5 140.5v3"/><path d="M771.2 140.5v3"/><path d="M776.8 140.5v3"/><path d="M782.5 140.5v3"/><path d="M788.2 124v19"/><path d="M793.9 140.5v3"/><path d="M799.5 140.5v3"/><path d="M805.2 140.5v3"/><path d="M810.9 140.5v3"/><path d="M816.5 135.5v8"/><path d="M822.2 140.5v3"/><path d="M827.9 140.5v3"/><path d="M833.6 140.5v3"/><path d="M839.2 140.5v3"/><path d="M844.9 124v19"/><path d="M850.6 140.5v3"/><path d="M856.3 140.5v3"/><path d="M861.9 140.5v3"/><path d="M867.6 140.5v3"/><path d="M873.3 135.5v8"/><path d="M878.9 140.5v3"/><path d="M884.6 140.5v3"/><path d="M890.3 140.5v3"/><path d="M896 140.5v3"/><path d="M901.6 124v19"/><path d="M907.3 140.5v3"/><path d="M913 140.5v3"/><path d="M918.7 140.5v3"/><path d="M924.3 140.5v3"/><path d="M930 135.5v8"/><path d="M935.7 140.5v3"/><path d="M941.3 140.5v3"/><path d="M947 140.5v3"/><path d="M952.7 140.5v3"/><path d="M958.4 124v19"/><path d="M964 140.5v3"/><path d="M969.7 140.5v3"/><path d="M975.4 140.5v3"/><path d="M981 140.5v3"/><path d="M986.7 135.5v8"/><path d="M992.4 140.5v3"/><path d="M998.1 140.5v3"/><path d="M1003.7 140.5v3"/><path d="M1009.4 140.5v3"/><path d="M1015.1 124v19"/><path d="M1020.8 140.5v3"/><path d="M1026.4 140.5v3"/><path d="M1032.1 140.5v3"/><path d="M1037.8 140.5v3"/><path d="M1043.4 135.5v8"/><path d="M1049.1 140.5v3"/><path d="M1054.8 140.5v3"/><path d="M1060.5 140.5v3"/><path d="M1066.1 140.5v3"/><path d="M1071.8 124v19"/><path d="M1077.5 140.5v3"/><path d="M1083.2 140.5v3"/><path d="M1088.8 140.5v3"/><path d="M1094.5 140.5v3"/><path d="M1100.2 135.5v8"/><path d="M1105.8 140.5v3"/><path d="M1111.5 140.5v3"/><path d="M1117.2 140.5v3"/><path d="M1122.9 140.5v3"/><path d="M1128.5 124v19"/><path d="M1134.2 140.5v3"/><path d="M1139.9 140.5v3"/><path d="M1145.5 140.5v3"/><path d="M1151.2 140.5v3"/><path d="M1156.9 135.5v8"/><path d="M1162.6 140.5v3"/><path d="M1168.2 140.5v3"/><path d="M1173.9 140.5v3"/><path d="M1179.6 140.5v3"/><path d="M1185.3 124v19"/><path d="M1190.9 140.5v3"/><path d="M1196.6 140.5v3"/><path d="M1202.3 140.5v3"/><path d="M1207.9 140.5v3"/><path d="M1213.6 135.5v8"/><path d="M1219.3 140.5v3"/><path d="M1225 140.5v3"/><path d="M1230.6 140.5v3"/><path d="M1236.3 140.5v3"/><path d="M1242 124v19"/><path d="M1247.7 140.5v3"/><path d="M1253.3 140.5v3"/><path d="M1259 140.5v3"/><path d="M1264.7 140.5v3"/><path d="M1270.3 135.5v8"/><path d="M1276 140.5v3"/><path d="M1281.7 140.5v3"/><path d="M1287.4 140.5v3"/><path d="M1293 140.5v3"/><path d="M1298.7 124v19"/><path d="M1304.4 140.5v3"/><path d="M1310 140.5v3"/><path d="M1315.7 140.5v3"/><path d="M1321.4 140.5v3"/><path d="M1327.1 135.5v8"/><path d="M1332.7 140.5v3"/><path d="M1338.4 140.5v3"/><path d="M1344.1 140.5v3"/><path d="M1349.8 140.5v3"/><path d="M1355.4 124v19"/><path d="M1361.1 140.5v3"/><path d="M1366.8 140.5v3"/><path d="M1372.4 140.5v3"/><path d="M1378.1 140.5v3"/><path d="M1383.8 135.5v8"/><path d="M1389.5 140.5v3"/><path d="M1395.1 140.5v3"/><path d="M1400.8 140.5v3"/><path d="M1406.5 140.5v3"/><path d="M1412.2 124v19"/><path d="M1417.8 140.5v3"/><path d="M1423.5 140.5v3"/><path d="M1429.2 140.5v3"/><path d="M1434.8 140.5v3"/><path d="M1440.5 135.5v8"/><path d="M1446.2 140.5v3"/><path d="M1451.9 140.5v3"/><path d="M1457.5 140.5v3"/><path d="M1463.2 140.5v3"/><path d="M1468.9 124v19"/><path d="M1474.5 140.5v3"/><path d="M1480.2 140.5v3"/><path d="M1485.9 140.5v3"/><path d="M1491.6 140.5v3"/><path d="M1497.2 135.5v8"/><path d="M1502.9 140.5v3"/><path d="M1508.6 140.5v3"/><path d="M1514.3 140.5v3"/><path d="M1519.9 140.5v3"/><path d="M1525.6 124v19"/><path d="M1531.3 140.5v3"/><path d="M1536.9 140.5v3"/><path d="M1542.6 140.5v3"/><path d="M1548.3 140.5v3"/><path d="M1554 135.5v8"/><path d="M1559.6 140.5v3"/><path d="M1565.3 140.5v3"/><path d="M1571 140.5v3"/><path d="M1576.7 140.5v3"/><path d="M1582.3 124v19"/><path d="M1588 140.5v3"/><path d="M1593.7 140.5v3"/><path d="M1599.3 140.5v3"/><path d="M1605 140.5v3"/><path d="M1610.7 135.5v8"/><path d="M1616.4 140.5v3"/><path d="M1622 140.5v3"/><path d="M1627.7 140.5v3"/><path d="M1633.4 140.5v3"/><path d="M1639 124v19"/><path d="M1644.7 140.5v3"/><path d="M1650.4 140.5v3"/><path d="M60 143.5H1652" stroke="#8e8e8e"/><path d="M60.5 124v20" stroke="#8e8e8e"/></g><g font-family="Liberation Sans, sans-serif" font-size="10" fill="#cfcfcf"><text x="53.3" y="136">20</text><text x="110" y="136">0</text><text x="166.7" y="136">20</text><text x="223.4" y="136">40</text><text x="280.2" y="136">60</text><text x="336.9" y="136">80</text><text x="393.6" y="136">100</text><text x="450.3" y="136">120</text><text x="507.1" y="136">140</text><text x="563.8" y="136">160</text><text x="620.5" y="136">180</text><text x="677.2" y="136">200</text><text x="734" y="136">220</text><text x="790.7" y="136">240</text><text x="847.4" y="136">260</text><text x="904.1" y="136">280</text><text x="960.9" y="136">300</text><text x="1017.6" y="136">320</text><text x="1074.3" y="136">340</text><text x="1131" y="136">360</text><text x="1187.8" y="136">380</text><text x="1244.5" y="136">400</text><text x="1301.2" y="136">420</text><text x="1357.9" y="136">440</text><text x="1414.7" y="136">460</text><text x="1471.4" y="136">480</text><text x="1528.1" y="136">500</text><text x="1584.8" y="136">520</text><text x="1641.5" y="136">540</text></g></svg></div>
<div class="a" style="left:40px;top:144px;width:20px;height:870px;overflow:hidden"><svg style="left:0;top:0" width="20" height="870" viewBox="40 144 20 870"><g stroke="#a8a8a8" stroke-width="1"><path d="M57 163.8H60"/><path d="M57 169.5H60"/><path d="M57 175.2H60"/><path d="M42 180.8H60"/><path d="M57 186.5H60"/><path d="M57 192.2H60"/><path d="M57 197.9H60"/><path d="M57 203.5H60"/><path d="M52 209.2H60"/><path d="M57 214.9H60"/><path d="M57 220.6H60"/><path d="M57 226.2H60"/><path d="M57 231.9H60"/><path d="M42 237.6H60"/><path d="M57 243.3H60"/><path d="M57 249H60"/><path d="M57 254.6H60"/><path d="M57 260.3H60"/><path d="M52 266H60"/><path d="M57 271.7H60"/><path d="M57 277.3H60"/><path d="M57 283H60"/><path d="M57 288.7H60"/><path d="M42 294.4H60"/><path d="M57 300H60"/><path d="M57 305.7H60"/><path d="M57 311.4H60"/><path d="M57 317.1H60"/><path d="M52 322.8H60"/><path d="M57 328.4H60"/><path d="M57 334.1H60"/><path d="M57 339.8H60"/><path d="M57 345.5H60"/><path d="M42 351.1H60"/><path d="M57 356.8H60"/><path d="M57 362.5H60"/><path d="M57 368.2H60"/><path d="M57 373.9H60"/><path d="M52 379.5H60"/><path d="M57 385.2H60"/><path d="M57 390.9H60"/><path d="M57 396.6H60"/><path d="M57 402.2H60"/><path d="M42 407.9H60"/><path d="M57 413.6H60"/><path d="M57 419.3H60"/><path d="M57 424.9H60"/><path d="M57 430.6H60"/><path d="M52 436.3H60"/><path d="M57 442H60"/><path d="M57 447.7H60"/><path d="M57 453.3H60"/><path d="M57 459H60"/><path d="M42 464.7H60"/><path d="M57 470.4H60"/><path d="M57 476H60"/><path d="M57 481.7H60"/><path d="M57 487.4H60"/><path d="M52 493.1H60"/><path d="M57 498.8H60"/><path d="M57 504.4H60"/><path d="M57 510.1H60"/><path d="M57 515.8H60"/><path d="M42 521.5H60"/><path d="M57 527.1H60"/><path d="M57 532.8H60"/><path d="M57 538.5H60"/><path d="M57 544.2H60"/><path d="M52 549.8H60"/><path d="M57 555.5H60"/><path d="M57 561.2H60"/><path d="M57 566.9H60"/><path d="M57 572.6H60"/><path d="M42 578.2H60"/><path d="M57 583.9H60"/><path d="M57 589.6H60"/><path d="M57 595.3H60"/><path d="M57 600.9H60"/><path d="M52 606.6H60"/><path d="M57 612.3H60"/><path d="M57 618H60"/><path d="M57 623.6H60"/><path d="M57 629.3H60"/><path d="M42 635H60"/><path d="M57 640.7H60"/><path d="M57 646.4H60"/><path d="M57 652H60"/><path d="M57 657.7H60"/><path d="M52 663.4H60"/><path d="M57 669.1H60"/><path d="M57 674.7H60"/><path d="M57 680.4H60"/><path d="M57 686.1H60"/><path d="M42 691.8H60"/><path d="M57 697.5H60"/><path d="M57 703.1H60"/><path d="M57 708.8H60"/><path d="M57 714.5H60"/><path d="M52 720.2H60"/><path d="M57 725.8H60"/><path d="M57 731.5H60"/><path d="M57 737.2H60"/><path d="M57 742.9H60"/><path d="M42 748.5H60"/><path d="M57 754.2H60"/><path d="M57 759.9H60"/><path d="M57 765.6H60"/><path d="M57 771.3H60"/><path d="M52 776.9H60"/><path d="M57 782.6H60"/><path d="M57 788.3H60"/><path d="M57 794H60"/><path d="M57 799.6H60"/><path d="M42 805.3H60"/><path d="M57 811H60"/><path d="M57 816.7H60"/><path d="M57 822.4H60"/><path d="M57 828H60"/><path d="M52 833.7H60"/><path d="M57 839.4H60"/><path d="M57 845.1H60"/><path d="M57 850.7H60"/><path d="M57 856.4H60"/><path d="M42 862.1H60"/><path d="M57 867.8H60"/><path d="M57 873.4H60"/><path d="M57 879.1H60"/><path d="M57 884.8H60"/><path d="M52 890.5H60"/><path d="M57 896.2H60"/><path d="M57 901.8H60"/><path d="M57 907.5H60"/><path d="M57 950.6H60"/><path d="M57 956.3H60"/><path d="M57 962H60"/><path d="M42 967.6H60"/><path d="M57 973.3H60"/><path d="M57 979H60"/><path d="M57 984.7H60"/><path d="M57 990.3H60"/><path d="M52 996H60"/><path d="M57 1001.7H60"/><path d="M57 1007.4H60"/><path d="M57 1013H60"/><path d="M59.5 144V1014" stroke="#8e8e8e"/></g><g font-family="Liberation Sans, sans-serif" font-size="10" fill="#cfcfcf"><text x="44" y="192.3">2</text><text x="44" y="202.1">0</text><text x="44" y="249.1">0</text><text x="44" y="305.9">2</text><text x="44" y="315.7">0</text><text x="44" y="362.6">4</text><text x="44" y="372.4">0</text><text x="44" y="419.4">6</text><text x="44" y="429.2">0</text><text x="44" y="476.2">8</text><text x="44" y="486">0</text><text x="44" y="533">1</text><text x="44" y="542.8">0</text><text x="44" y="552.6">0</text><text x="44" y="589.7">1</text><text x="44" y="599.5">2</text><text x="44" y="609.3">0</text><text x="44" y="646.5">1</text><text x="44" y="656.3">4</text><text x="44" y="666.1">0</text><text x="44" y="703.3">1</text><text x="44" y="713.1">6</text><text x="44" y="722.9">0</text><text x="44" y="760">1</text><text x="44" y="769.8">8</text><text x="44" y="779.6">0</text><text x="44" y="816.8">2</text><text x="44" y="826.6">0</text><text x="44" y="836.4">0</text><text x="44" y="873.6">2</text><text x="44" y="883.4">2</text><text x="44" y="893.2">0</text><text x="44" y="979.1">2</text><text x="44" y="988.9">0</text></g><rect x="40" y="144" width="20" height="15.5" fill="#555"/><rect x="40" y="911.5" width="20" height="35.5" fill="#585858"/></svg></div>
<svg style="left:40px;top:124px" width="20" height="20"><path d="M0 5.5h20M5.5 0v20" stroke="#8a8a8a" stroke-dasharray="1 1.5"/></svg>
<div class="a" style="left:1650px;top:124px;width:22px;height:906px;background:#383838"></div>
<div class="a" style="left:1650px;top:100px;width:22px;height:24px;background:#383838"></div>
<div class="a" style="left:1652px;top:162px;width:16.3px;height:450.3px;background:#909090"></div>
<svg style="left:1655px;top:130px" width="11" height="8"><path d="M0 7.5L5.5 0L11 7.5z" fill="#f0f0f0"/></svg>
<svg style="left:1655px;top:1000px" width="11" height="8"><path d="M0 0L5.5 7.5L11 0z" fill="#f0f0f0"/></svg>
<div class="a" style="left:1668.3px;top:100px;width:3.7px;height:930px;background:#2f2f2f"></div>
<div class="a" style="left:40px;top:1014px;width:1612px;height:16px;background:#535353"></div>
<div class="a" style="left:40px;top:1014px;width:1612px;height:1px;background:#474747"></div>
<div class="a" style="left:62.5px;top:1018px;width:23px;height:12px;background:#b4b4b4;border-radius:1px"></div>
<svg style="left:64px;top:1018.5px" width="20" height="12"><circle cx="6" cy="6" r="3.2" fill="none" stroke="#333" stroke-width="2.2" stroke-dasharray="1.7 1.1"/><circle cx="6" cy="6" r="2.2" fill="none" stroke="#333" stroke-width="1.3"/><path d="M15 1.5v6M15 9v2" stroke="#333" stroke-width="2"/></svg>
<svg style="left:95px;top:1017px" width="17" height="13"><path d="M7 2.5H1.5v10h10V9" fill="none" stroke="#dcdcdc" stroke-width="1.5"/><path d="M5 10c.5-4 3-6 6.5-6V1.5L16 5.5l-4.5 4V7C9 7 7 8 5 10z" fill="#dcdcdc"/></svg>
<svg style="left:122px;top:1019px" width="10" height="10"><path d="M1 0v10" stroke="#8c8c8c" stroke-width="1.6"/><path d="M9.5 0v10L3 5z" fill="#8c8c8c"/></svg>
<svg style="left:141px;top:1019px" width="8" height="10"><path d="M7 0v10L0 5z" fill="#8c8c8c"/></svg>
<div class="t" style="left:157px;top:1020px;font-size:11px;color:#e0e0e0">1</div>
<svg style="left:257px;top:1021px" width="10" height="7"><path d="M0 0h10l-5 6.5z" fill="#e8e8e8"/></svg>
<svg style="left:278px;top:1019px" width="8" height="10"><path d="M.5 0v10l7-5z" fill="#e4e4e4"/></svg>
<svg style="left:293px;top:1019px" width="11" height="10"><path d="M.5 0v10l7-5z" fill="#e4e4e4"/><path d="M9.5 0v10" stroke="#e4e4e4" stroke-width="1.8"/></svg>
<svg style="left:313px;top:1017px" width="20" height="14"><circle cx="7.5" cy="8" r="6.5" fill="none" stroke="#dcdcdc" stroke-width="1.5"/><path d="M4.5 4.5h4l2.5 2.5v6h-6.5z" fill="#dcdcdc"/><path d="M8.5 4.5v2.5h2.5" fill="none" stroke="#535353"/><path d="M16 11.5h3l-1.5 2z" fill="#dcdcdc"/></svg>
<div class="t" style="left:344px;top:1020px;font-size:11px;color:#dcdcdc;transform:scaleX(.968);transform-origin:0 0">[Grundprofil] (Arbeitsp...</div>
<svg style="left:470px;top:1021.5px" width="10" height="7"><path d="M0 0h10l-5 6z" fill="#e8e8e8"/></svg>
<div class="a" style="left:487px;top:1017.5px;width:14px;height:14px;border-radius:7px;background:radial-gradient(circle at 40% 35%,#74d03a,#4ea61f)"></div>
<div class="t" style="left:505px;top:1020px;font-size:11px;color:#dcdcdc;transform:scaleX(.916);transform-origin:0 0">Ohne Fehler</div>
<svg style="left:591px;top:1023px" width="7" height="4"><path d="M0 0h7L3.5 4z" fill="#d0d0d0"/></svg>
<div class="a" style="left:603px;top:1015px;width:1049px;height:15px;background:#383838"></div>
<div class="a" style="left:940px;top:1016px;width:409px;height:14px;background:#909090"></div>
<svg style="left:608px;top:1018px" width="11" height="11"><path d="M10.5 0v11L1 5.5z" fill="#f0f0f0"/></svg>
<svg style="left:1608px;top:1018px" width="11" height="11"><path d="M.5 0v11L10 5.5z" fill="#f0f0f0"/></svg>
<svg style="left:1630px;top:1017px" width="19" height="13"><rect x=".8" y=".8" width="17" height="12" fill="#383838" stroke="#e8e8e8" stroke-width="1.6"/><path d="M9.3 0v13" stroke="#e8e8e8" stroke-width="2"/></svg>
<div class="a" style="left:1652px;top:1014px;width:17px;height:16px;background:#535353"></div>
<svg style="left:1655px;top:1017px" width="13" height="13"><path d="M12 2v1M9 5h1M12 5v1M6 8h1M9 8h1M12 8h1M3 11h1M6 11h1M9 11h1M12 11h1" stroke="#9a9a9a" stroke-width="1.5"/></svg>
<div class="a" style="left:1672px;top:100px;width:248px;height:930px;background:#3a3a3a"></div>
<div class="a" style="left:1672px;top:100px;width:248px;height:16px;background:#3c3c3c;border-top:1px solid #2c2c2c"></div>
<svg style="left:1905px;top:105px" width="9" height="7"><path d="M0 0l3.5 3.5L0 7zM4.5 0L8 3.5L4.5 7z" fill="#dcdcdc"/></svg>
<div class="a" style="left:1672px;top:116px;width:248px;height:21.5px;background:#404040"></div>
<div class="a" style="left:1672px;top:116px;width:62px;height:22px;background:#535353;border-top:1px solid #636363"></div>
<svg style="left:1677px;top:120.5px" width="7" height="11"><path d="M.8 4L3.5 1l2.7 3M.8 7L3.5 10l2.7-3" fill="none" stroke="#e8e8e8" stroke-width="1.3"/></svg>
<div class="t" style="left:1687px;top:120px;font-size:12px;font-weight:bold;color:#ececec">Ebenen</div>
<div class="t" style="left:1743.5px;top:120px;font-size:12px;font-weight:bold;color:#aaaaaa">Seiten</div>
<div class="a" style="left:1787px;top:117px;width:86px;height:20px;overflow:hidden"><div class="t" style="left:0;top:3px;font-size:12px;font-weight:bold;color:#aaaaaa">Verknüpfungen</div></div>
<svg style="left:1898px;top:121.5px" width="16" height="9"><path d="M0 1.5h5L2.5 4.5z" fill="#d8d8d8"/><path d="M6.5 .5H16M6.5 3H16M6.5 5.5H16M6.5 8H16" stroke="#d0d0d0" stroke-width="1.1"/></svg>
<div class="a" style="left:1672px;top:137.5px;width:233px;height:366px;background:#4a4a4a"></div>
<div class="a" style="left:1905px;top:137.5px;width:15px;height:366px;background:#3e3e3e"></div>
<svg style="left:1908.5px;top:144.5px" width="8" height="6"><path d="M0 5.5L4 0l4 5.5z" fill="#8a8a8a"/></svg>
<svg style="left:1908.5px;top:491px" width="8" height="6"><path d="M0 0l4 5.5L8 0z" fill="#8a8a8a"/></svg>
<div class="a" style="left:1672px;top:160.3px;width:233px;height:1.3px;background:#3c3c3c"></div>
<svg style="left:1675.5px;top:144.4px" width="16" height="11"><path d="M.6 5.5C3 1.7 5.5.700 8 .700s5 1 7.4 4.8c-2.4 3.8-4.9 4.8-7.4 4.8s-5-1-7.4-4.8z" fill="#4a4a4a" stroke="#e4e4e4" stroke-width="1.7"/><circle cx="8" cy="5.3" r="3.3" fill="#e4e4e4"/><circle cx="8.3" cy="5.5" r="1.7" fill="#3a3a3a"/><circle cx="9.4" cy="4.2" r=".8" fill="#fff"/></svg>
<div class="a" style="left:1717.5px;top:139.9px;width:4.2px;height:19.8px;background:#4a90f0"></div>
<svg style="left:1727px;top:145.8px" width="10" height="6"><path d="M0 0h10L5 5.5z" fill="#e0e0e0"/></svg>
<div class="t" style="left:1739px;top:146.5px;font-size:11px;font-weight:normal;color:#dedede;transform:scaleX(0.94);transform-origin:0 0">Meine Ebene</div>
<div class="a" style="left:1889px;top:144.3px;width:9px;height:9px;background:#4a9cff;border:1.5px solid #101010"></div>
<div class="a" style="left:1672px;top:183.1px;width:233px;height:1.3px;background:#3c3c3c"></div>
<svg style="left:1675.5px;top:167.15px" width="16" height="11"><path d="M.6 5.5C3 1.7 5.5.700 8 .700s5 1 7.4 4.8c-2.4 3.8-4.9 4.8-7.4 4.8s-5-1-7.4-4.8z" fill="#4a4a4a" stroke="#e4e4e4" stroke-width="1.7"/><circle cx="8" cy="5.3" r="3.3" fill="#e4e4e4"/><circle cx="8.3" cy="5.5" r="1.7" fill="#3a3a3a"/><circle cx="9.4" cy="4.2" r=".8" fill="#fff"/></svg>
<div class="a" style="left:1717.5px;top:162.7px;width:4.2px;height:19.8px;background:#4a90f0"></div>
<svg style="left:1741px;top:167px" width="6" height="10"><path d="M0 0v10l5.5-5z" fill="#e0e0e0"/></svg>
<div class="t" style="left:1752px;top:169.2px;font-size:11px;font-weight:normal;color:#dedede;transform:scaleX(0.94);transform-origin:0 0">Streifen oben</div>
<div class="a" style="left:1889.5px;top:167.5px;width:8px;height:8px;border:1px solid #2e2e2e;background:#505050"></div>
<div class="a" style="left:1722.5px;top:184.9px;width:177.5px;height:21.2px;background:linear-gradient(#4d5d75,#435067)"></div>
<div class="a" style="left:1672px;top:205.8px;width:233px;height:1.3px;background:#3c3c3c"></div>
<svg style="left:1675.5px;top:189.9px" width="16" height="11"><path d="M.6 5.5C3 1.7 5.5.700 8 .700s5 1 7.4 4.8c-2.4 3.8-4.9 4.8-7.4 4.8s-5-1-7.4-4.8z" fill="#4a4a4a" stroke="#e4e4e4" stroke-width="1.7"/><circle cx="8" cy="5.3" r="3.3" fill="#e4e4e4"/><circle cx="8.3" cy="5.5" r="1.7" fill="#3a3a3a"/><circle cx="9.4" cy="4.2" r=".8" fill="#fff"/></svg>
<div class="a" style="left:1717.5px;top:185.4px;width:4.2px;height:19.8px;background:#4a90f0"></div>
<svg style="left:1739.5px;top:191.3px" width="10" height="6"><path d="M0 0h10L5 5.5z" fill="#e0e0e0"/></svg>
<div class="t" style="left:1752px;top:192px;font-size:11px;font-weight:bold;color:#ffffff;transform:scaleX(1);transform-origin:0 0">Streifen unten</div>
<div class="a" style="left:1889px;top:189.8px;width:9px;height:9px;background:#4a9cff;border:1.5px solid #101010"></div>
<div class="a" style="left:1672px;top:228.6px;width:233px;height:1.3px;background:#3c3c3c"></div>
<svg style="left:1675.5px;top:212.65px" width="16" height="11"><path d="M.6 5.5C3 1.7 5.5.700 8 .700s5 1 7.4 4.8c-2.4 3.8-4.9 4.8-7.4 4.8s-5-1-7.4-4.8z" fill="#4a4a4a" stroke="#e4e4e4" stroke-width="1.7"/><circle cx="8" cy="5.3" r="3.3" fill="#e4e4e4"/><circle cx="8.3" cy="5.5" r="1.7" fill="#3a3a3a"/><circle cx="9.4" cy="4.2" r=".8" fill="#fff"/></svg>
<div class="a" style="left:1717.5px;top:208.2px;width:4.2px;height:19.8px;background:#4a90f0"></div>
<div class="t" style="left:1762.5px;top:214.7px;font-size:11px;font-weight:normal;color:#dedede;transform:scaleX(0.94);transform-origin:0 0">1</div>
<div class="a" style="left:1889.5px;top:213px;width:8px;height:8px;border:1px solid #2e2e2e;background:#505050"></div>
<div class="a" style="left:1672px;top:251.3px;width:233px;height:1.3px;background:#3c3c3c"></div>
<svg style="left:1675.5px;top:235.4px" width="16" height="11"><path d="M.6 5.5C3 1.7 5.5.700 8 .700s5 1 7.4 4.8c-2.4 3.8-4.9 4.8-7.4 4.8s-5-1-7.4-4.8z" fill="#4a4a4a" stroke="#e4e4e4" stroke-width="1.7"/><circle cx="8" cy="5.3" r="3.3" fill="#e4e4e4"/><circle cx="8.3" cy="5.5" r="1.7" fill="#3a3a3a"/><circle cx="9.4" cy="4.2" r=".8" fill="#fff"/></svg>
<div class="a" style="left:1717.5px;top:230.9px;width:4.2px;height:19.8px;background:#4a90f0"></div>
<div class="t" style="left:1762.5px;top:237.5px;font-size:11px;font-weight:normal;color:#dedede;transform:scaleX(0.94);transform-origin:0 0">2</div>
<div class="a" style="left:1889.5px;top:235.8px;width:8px;height:8px;border:1px solid #2e2e2e;background:#505050"></div>
<div class="a" style="left:1672px;top:274.1px;width:233px;height:1.3px;background:#3c3c3c"></div>
<svg style="left:1675.5px;top:258.15px" width="16" height="11"><path d="M.6 5.5C3 1.7 5.5.700 8 .700s5 1 7.4 4.8c-2.4 3.8-4.9 4.8-7.4 4.8s-5-1-7.4-4.8z" fill="#4a4a4a" stroke="#e4e4e4" stroke-width="1.7"/><circle cx="8" cy="5.3" r="3.3" fill="#e4e4e4"/><circle cx="8.3" cy="5.5" r="1.7" fill="#3a3a3a"/><circle cx="9.4" cy="4.2" r=".8" fill="#fff"/></svg>
<div class="a" style="left:1717.5px;top:253.7px;width:4.2px;height:19.8px;background:#4a90f0"></div>
<div class="t" style="left:1762.5px;top:260.2px;font-size:11px;font-weight:normal;color:#dedede;transform:scaleX(0.94);transform-origin:0 0">3</div>
<div class="a" style="left:1889.5px;top:258.5px;width:8px;height:8px;border:1px solid #2e2e2e;background:#505050"></div>
<div class="a" style="left:1672px;top:296.8px;width:233px;height:1.3px;background:#3c3c3c"></div>
<svg style="left:1675.5px;top:280.9px" width="16" height="11"><path d="M.6 5.5C3 1.7 5.5.700 8 .700s5 1 7.4 4.8c-2.4 3.8-4.9 4.8-7.4 4.8s-5-1-7.4-4.8z" fill="#4a4a4a" stroke="#e4e4e4" stroke-width="1.7"/><circle cx="8" cy="5.3" r="3.3" fill="#e4e4e4"/><circle cx="8.3" cy="5.5" r="1.7" fill="#3a3a3a"/><circle cx="9.4" cy="4.2" r=".8" fill="#fff"/></svg>
<div class="a" style="left:1717.5px;top:276.4px;width:4.2px;height:19.8px;background:#4a90f0"></div>
<div class="t" style="left:1762.5px;top:283px;font-size:11px;font-weight:normal;color:#dedede;transform:scaleX(0.94);transform-origin:0 0">4</div>
<div class="a" style="left:1889.5px;top:281.3px;width:8px;height:8px;border:1px solid #2e2e2e;background:#505050"></div>
<div class="a" style="left:1672px;top:319.6px;width:233px;height:1.3px;background:#3c3c3c"></div>
<svg style="left:1700.5px;top:302.65px" width="11" height="13"><path d="M2.7 6V3.8a2.8 2.8 0 0 1 5.6 0V6" fill="none" stroke="#e0e0e0" stroke-width="1.5"/><rect x=".5" y="5.5" width="10" height="7.5" rx="1" fill="#e0e0e0"/><path d="M5.5 8v3" stroke="#4a4a4a" stroke-width="1.5"/></svg>
<div class="a" style="left:1717.5px;top:299.1px;width:4.2px;height:19.8px;background:#4a90f0"></div>
<div class="t" style="left:1753px;top:305.7px;font-size:11px;font-weight:normal;color:#dedede;transform:scaleX(0.94);transform-origin:0 0">Hintergrundrechteck</div>
<div class="a" style="left:1889.5px;top:304px;width:8px;height:8px;border:1px solid #2e2e2e;background:#505050"></div>
<div class="a" style="left:1672px;top:342.3px;width:233px;height:1.3px;background:#3c3c3c"></div>
<svg style="left:1675.5px;top:326.4px" width="16" height="11"><path d="M.6 5.5C3 1.7 5.5.700 8 .700s5 1 7.4 4.8c-2.4 3.8-4.9 4.8-7.4 4.8s-5-1-7.4-4.8z" fill="#4a4a4a" stroke="#e4e4e4" stroke-width="1.7"/><circle cx="8" cy="5.3" r="3.3" fill="#e4e4e4"/><circle cx="8.3" cy="5.5" r="1.7" fill="#3a3a3a"/><circle cx="9.4" cy="4.2" r=".8" fill="#fff"/></svg>
<svg style="left:1700.5px;top:325.4px" width="11" height="13"><path d="M2.7 6V3.8a2.8 2.8 0 0 1 5.6 0V6" fill="none" stroke="#e0e0e0" stroke-width="1.5"/><rect x=".5" y="5.5" width="10" height="7.5" rx="1" fill="#e0e0e0"/><path d="M5.5 8v3" stroke="#4a4a4a" stroke-width="1.5"/></svg>
<div class="a" style="left:1717.5px;top:321.9px;width:4.2px;height:19.8px;background:#e8721c"></div>
<svg style="left:1728.5px;top:326.3px" width="6" height="10"><path d="M0 0v10l5.5-5z" fill="#e0e0e0"/></svg>
<div class="t" style="left:1739px;top:328.5px;font-size:11px;font-weight:normal;color:#dedede;transform:scaleX(0.94);transform-origin:0 0">Vorlage</div>
<div class="a" style="left:1889.5px;top:326.8px;width:8px;height:8px;border:1px solid #2e2e2e;background:#505050"></div>
<div class="a" style="left:1695px;top:137.5px;width:1px;height:206px;background:#3e3e3e"></div>
<svg style="left:1863px;top:141px" width="16" height="17"><path d="M1 16l2-8l6-5l5.5 5.5l-5 6z" fill="#d8d8d8"/><path d="M9.5 1.5l5.5 5.5l-1.5 1.5l-5.5-5.5z" fill="#e8e8e8"/><circle cx="8" cy="9" r="1.4" fill="#4a4a4a"/><path d="M1.5 15.5l5.5-5.5" stroke="#4a4a4a" stroke-width=".9"/></svg>
<div class="red" style="left:1667.5px;top:180.3px;width:238.5px;height:120px"></div>
<div class="a" style="left:1672px;top:503.5px;width:248px;height:19px;background:#535353;border-top:1px solid #5e5e5e"></div>
<div class="t" style="left:1677px;top:509.5px;font-size:11px;color:#dcdcdc;transform:scaleX(.945);transform-origin:0 0">Seite: 1, 2 Ebenen</div>
<svg style="left:1841px;top:507px" width="14" height="13"><path d="M1 .5h12.5v12.5H5.5L1 8z" fill="#dcdcdc"/><path d="M1 8h4.5v5" fill="#535353"/><path d="M1.5 8h4v4.5z" fill="#8c8c8c"/></svg>
<svg style="left:1877.5px;top:506.5px" width="14" height="14" opacity="1"><path d="M4.5 1.5h5" stroke="#dcdcdc" stroke-width="1.6"/><path d="M.5 3.5h13" stroke="#dcdcdc" stroke-width="1.6"/><path d="M1.8 5.5h10.4l-1 8H2.8z" fill="#dcdcdc"/><path d="M4.8 6.5v6M7 6.5v6M9.2 6.5v6" stroke="#535353" stroke-width="1"/></svg>
<svg style="left:1908px;top:510px" width="12" height="12"><path d="M11 2v1M8 5h1M11 5v1M5 8h1M8 8h1M11 8h1" stroke="#3a3a3a" stroke-width="1.5"/></svg>
<div class="a" style="left:1672px;top:522.5px;width:248px;height:4.5px;background:#2f2f2f"></div>
<div class="a" style="left:1672px;top:527px;width:248px;height:20px;background:#404040"></div>
<div class="a" style="left:1731px;top:527px;width:81px;height:20.5px;background:#535353;border-top:1px solid #636363"></div>
<div class="t" style="left:1680px;top:531px;font-size:12px;font-weight:bold;color:#aaaaaa">Kontur</div>
<svg style="left:1736px;top:531.5px" width="7" height="11"><path d="M.8 4L3.5 1l2.7 3M.8 7L3.5 10l2.7-3" fill="none" stroke="#e8e8e8" stroke-width="1.3"/></svg>
<div class="t" style="left:1746.5px;top:531px;font-size:12px;font-weight:bold;color:#ececec">Farbfelder</div>
<div class="t" style="left:1821px;top:531px;font-size:12px;font-weight:bold;color:#aaaaaa">Verlauf</div>
<svg style="left:1898px;top:532.5px" width="16" height="9"><path d="M0 1.5h5L2.5 4.5z" fill="#d8d8d8"/><path d="M6.5 .5H16M6.5 3H16M6.5 5.5H16M6.5 8H16" stroke="#d0d0d0" stroke-width="1.1"/></svg>
<div class="a" style="left:1672px;top:547px;width:248px;height:30px;background:#535353"></div>
<div class="a" style="left:1678px;top:550px;width:15px;height:15px;border:1px solid #8a8a8a;background:#4a4a4a"></div><div class="t" style="left:1681.5px;top:551px;font-size:13px;color:#e6e6e6">?</div>
<svg style="left:1688px;top:559px" width="13" height="13"><rect width="13" height="13" fill="#fff"/><rect x="3.5" y="3.5" width="6" height="6" fill="#535353"/><path d="M1.5 11.5L11.5 1.5" stroke="#e8101c" stroke-width="2.4"/></svg>
<svg style="left:1694px;top:549px" width="9" height="9"><path d="M1 3.5h4.5a2 2 0 0 1 2 2V8" fill="none" stroke="#e0e0e0" stroke-width="1.1"/><path d="M2.5 1.5L0 3.5L2.5 5.5zM5.5 6.5l2 2.5l2-2.5z" fill="#e0e0e0"/></svg>
<div class="a" style="left:1718px;top:557px;width:12px;height:12px;border:1.5px solid #d8d8d8;background:#5e5e5e"></div>
<div class="t" style="left:1736px;top:554px;font-family:'Liberation Serif',serif;font-size:17px;color:#9a9a9a">T</div>
<div class="t" style="left:1786px;top:559px;font-size:11px;color:#dcdcdc;transform:scaleX(.95);transform-origin:0 0">Farbton:</div>
<div class="fld" style="left:1830px;top:554px;width:37px;height:15px"><span style="top:1.5px;font-size:11px">100</span></div><div class="pl" style="left:1867px;top:554px;height:15px;width:15px"></div>
<div class="t" style="left:1885px;top:559px;font-size:11px;color:#dcdcdc">%</div>
<div class="a" style="left:1672px;top:577px;width:233px;height:361px;background:#4a4a4a"></div>
<div class="a" style="left:1905px;top:577px;width:15px;height:361px;background:#3e3e3e"></div>
<svg style="left:1908.5px;top:583px" width="8" height="6"><path d="M0 5.5L4 0l4 5.5z" fill="#8a8a8a"/></svg>
<svg style="left:1908.5px;top:926px" width="8" height="6"><path d="M0 0l4 5.5L8 0z" fill="#8a8a8a"/></svg>
<div class="a" style="left:1672px;top:600.2px;width:233px;height:1.3px;background:#3c3c3c"></div>
<svg style="left:1690px;top:581px" width="15" height="15"><rect x=".8" y=".8" width="13.4" height="13.4" fill="#fff" stroke="#080808" stroke-width="1.6"/><path d="M2 13L13 2" stroke="#e8101c" stroke-width="2.6"/></svg>
<div class="t" style="left:1708px;top:586px;font-size:11px;color:#e2e2e2;transform:scaleX(.96);transform-origin:0 0">[Ohne]</div>
<svg style="left:1847px;top:581.5px" width="16" height="16"><path d="M3 14l1-4l6.5-6.5l3 3L7 13z" fill="#cfcfcf"/><path d="M11 2.5a2 2 0 0 1 3 3l-1 1l-3-3z" fill="#ededed"/><path d="M3 14l.6-2.4l1.8 1.8z" fill="#4a4a4a"/><path d="M1.5 2l12 12.5" stroke="#4a4a4a" stroke-width="3.2"/><path d="M1.5 2l12 12.5" stroke="#f2f2f2" stroke-width="1.5"/></svg>
<svg style="left:1885px;top:582.7px" width="14" height="14"><rect width="14" height="14" fill="#d8d8d8"/><path d="M2 12.5L12.5 2" stroke="#e0304a" stroke-width="1.3"/></svg>
<div class="a" style="left:1672px;top:624.2px;width:233px;height:1.3px;background:#3c3c3c"></div>
<div class="a" style="left:1690px;top:605px;width:15px;height:15px;background:#ffffff;border:1.5px solid #080808"></div>
<div class="t" style="left:1708px;top:610px;font-size:11px;color:#e2e2e2;transform:scaleX(.96);transform-origin:0 0">[Papier]</div>
<div class="a" style="left:1672px;top:648.2px;width:233px;height:1.3px;background:#3c3c3c"></div>
<div class="a" style="left:1690px;top:629px;width:15px;height:15px;background:#000000;border:1.5px solid #080808"></div>
<div class="t" style="left:1708px;top:634px;font-size:11px;color:#e2e2e2;transform:scaleX(.96);transform-origin:0 0">[Schwarz]</div>
<svg style="left:1847px;top:629.5px" width="16" height="16"><path d="M3 14l1-4l6.5-6.5l3 3L7 13z" fill="#cfcfcf"/><path d="M11 2.5a2 2 0 0 1 3 3l-1 1l-3-3z" fill="#ededed"/><path d="M3 14l.6-2.4l1.8 1.8z" fill="#4a4a4a"/><path d="M1.5 2l12 12.5" stroke="#4a4a4a" stroke-width="3.2"/><path d="M1.5 2l12 12.5" stroke="#f2f2f2" stroke-width="1.5"/></svg>
<svg style="left:1866px;top:630.7px" width="14" height="14"><rect x=".5" y=".5" width="13" height="13" fill="#5e5e5e" stroke="#e4e4e4"/><path d="M2 2.5h10M2 4.5h10M2 6.5h10M2 8.5h10M2 10.5h10" stroke="#8e8e8e" stroke-width="1" stroke-dasharray="1 1"/><path d="M3 3.5h9M3 5.5h9M3 7.5h9M3 9.5h9M3 11.5h9" stroke="#8e8e8e" stroke-width="1" stroke-dasharray="1 1"/></svg>
<svg style="left:1885px;top:630.7px" width="14" height="14"><rect width="14" height="14" fill="#111"/><path d="M1 1h12L7 7z" fill="#e030d8"/><path d="M13 1v12L7 7z" fill="#f2e818"/><path d="M1 1v12L7 7z" fill="#18c8e8"/><path d="M1 13h12L7 7z" fill="#0a0a0a"/><rect x=".5" y=".5" width="13" height="13" fill="none" stroke="#e8e8e8"/></svg>
<div class="a" style="left:1672px;top:672.2px;width:233px;height:1.3px;background:#3c3c3c"></div>
<div class="a" style="left:1690px;top:653px;width:15px;height:15px;background:#000000;border:1.5px solid #080808"></div>
<div class="t" style="left:1708px;top:658px;font-size:11px;color:#e2e2e2;transform:scaleX(.96);transform-origin:0 0">[Passermarken]</div>
<svg style="left:1847px;top:653.5px" width="16" height="16"><path d="M3 14l1-4l6.5-6.5l3 3L7 13z" fill="#cfcfcf"/><path d="M11 2.5a2 2 0 0 1 3 3l-1 1l-3-3z" fill="#ededed"/><path d="M3 14l.6-2.4l1.8 1.8z" fill="#4a4a4a"/><path d="M1.5 2l12 12.5" stroke="#4a4a4a" stroke-width="3.2"/><path d="M1.5 2l12 12.5" stroke="#f2f2f2" stroke-width="1.5"/></svg>
<svg style="left:1885px;top:654.7px" width="14" height="14"><rect x=".5" y=".5" width="13" height="13" fill="#666" stroke="#dcdcdc"/><circle cx="7" cy="7" r="3" fill="none" stroke="#e4e4e4"/><path d="M7 2v10M2 7h10" stroke="#e4e4e4"/></svg>
<div class="a" style="left:1672px;top:696.2px;width:233px;height:1.3px;background:#3c3c3c"></div>
<div class="a" style="left:1690px;top:677px;width:15px;height:15px;background:#e8861e;border:1.5px solid #080808"></div>
<div class="t" style="left:1708px;top:682px;font-size:11px;color:#e2e2e2;transform:scaleX(.96);transform-origin:0 0">bleed area</div>
<svg style="left:1866px;top:678.7px" width="14" height="14"><rect x=".5" y=".5" width="13" height="13" fill="#777" stroke="#e4e4e4"/><circle cx="7" cy="7" r="3" fill="#d8d8d8"/><circle cx="7" cy="7" r="1.2" fill="#888"/></svg>
<svg style="left:1885px;top:678.7px" width="14" height="14"><rect width="14" height="14" fill="#111"/><path d="M1 1h12L7 7z" fill="#e030d8"/><path d="M13 1v12L7 7z" fill="#f2e818"/><path d="M1 1v12L7 7z" fill="#18c8e8"/><path d="M1 13h12L7 7z" fill="#0a0a0a"/><rect x=".5" y=".5" width="13" height="13" fill="none" stroke="#e8e8e8"/></svg>
<div class="a" style="left:1672px;top:720.2px;width:233px;height:1.3px;background:#3c3c3c"></div>
<div class="a" style="left:1690px;top:701px;width:15px;height:15px;background:#a3a89e;border:1.5px solid #080808"></div>
<div class="t" style="left:1708px;top:706px;font-size:11px;color:#e2e2e2;transform:scaleX(.96);transform-origin:0 0">safety distance</div>
<svg style="left:1866px;top:702.7px" width="14" height="14"><rect x=".5" y=".5" width="13" height="13" fill="#777" stroke="#e4e4e4"/><circle cx="7" cy="7" r="3" fill="#d8d8d8"/><circle cx="7" cy="7" r="1.2" fill="#888"/></svg>
<svg style="left:1885px;top:702.7px" width="14" height="14"><rect width="14" height="14" fill="#111"/><path d="M1 1h12L7 7z" fill="#e030d8"/><path d="M13 1v12L7 7z" fill="#f2e818"/><path d="M1 1v12L7 7z" fill="#18c8e8"/><path d="M1 13h12L7 7z" fill="#0a0a0a"/><rect x=".5" y=".5" width="13" height="13" fill="none" stroke="#e8e8e8"/></svg>
<div class="a" style="left:1672px;top:744.2px;width:233px;height:1.3px;background:#3c3c3c"></div>
<div class="a" style="left:1690px;top:725px;width:15px;height:15px;background:#3e403a;border:1.5px solid #080808"></div>
<div class="t" style="left:1708px;top:730px;font-size:11px;color:#e2e2e2;transform:scaleX(.96);transform-origin:0 0">infos</div>
<svg style="left:1866px;top:726.7px" width="14" height="14"><rect x=".5" y=".5" width="13" height="13" fill="#777" stroke="#e4e4e4"/><circle cx="7" cy="7" r="3" fill="#d8d8d8"/><circle cx="7" cy="7" r="1.2" fill="#888"/></svg>
<svg style="left:1885px;top:726.7px" width="14" height="14"><rect width="14" height="14" fill="#111"/><path d="M1 1h12L7 7z" fill="#e030d8"/><path d="M13 1v12L7 7z" fill="#f2e818"/><path d="M1 1v12L7 7z" fill="#18c8e8"/><path d="M1 13h12L7 7z" fill="#0a0a0a"/><rect x=".5" y=".5" width="13" height="13" fill="none" stroke="#e8e8e8"/></svg>
<div class="a" style="left:1672px;top:768.2px;width:233px;height:1.3px;background:#3c3c3c"></div>
<div class="a" style="left:1690px;top:749px;width:15px;height:15px;background:#a3a89e;border:1.5px solid #080808"></div>
<div class="t" style="left:1708px;top:754px;font-size:11px;color:#e2e2e2;transform:scaleX(.96);transform-origin:0 0">sides</div>
<svg style="left:1866px;top:750.7px" width="14" height="14"><rect x=".5" y=".5" width="13" height="13" fill="#777" stroke="#e4e4e4"/><circle cx="7" cy="7" r="3" fill="#d8d8d8"/><circle cx="7" cy="7" r="1.2" fill="#888"/></svg>
<svg style="left:1885px;top:750.7px" width="14" height="14"><rect width="14" height="14" fill="#111"/><path d="M1 1h12L7 7z" fill="#e030d8"/><path d="M13 1v12L7 7z" fill="#f2e818"/><path d="M1 1v12L7 7z" fill="#18c8e8"/><path d="M1 13h12L7 7z" fill="#0a0a0a"/><rect x=".5" y=".5" width="13" height="13" fill="none" stroke="#e8e8e8"/></svg>
<div class="a" style="left:1672px;top:792.2px;width:233px;height:1.3px;background:#3c3c3c"></div>
<div class="a" style="left:1690px;top:773px;width:15px;height:15px;background:#b4e0e0;border:1.5px solid #080808"></div>
<div class="t" style="left:1708px;top:778px;font-size:11px;color:#e2e2e2;transform:scaleX(.96);transform-origin:0 0">C=35 M=0 Y=15 K=0</div>
<svg style="left:1866px;top:774.7px" width="14" height="14"><rect x=".5" y=".5" width="13" height="13" fill="#5e5e5e" stroke="#e4e4e4"/><path d="M2 2.5h10M2 4.5h10M2 6.5h10M2 8.5h10M2 10.5h10" stroke="#8e8e8e" stroke-width="1" stroke-dasharray="1 1"/><path d="M3 3.5h9M3 5.5h9M3 7.5h9M3 9.5h9M3 11.5h9" stroke="#8e8e8e" stroke-width="1" stroke-dasharray="1 1"/></svg>
<svg style="left:1885px;top:774.7px" width="14" height="14"><rect width="14" height="14" fill="#111"/><path d="M1 1h12L7 7z" fill="#e030d8"/><path d="M13 1v12L7 7z" fill="#f2e818"/><path d="M1 1v12L7 7z" fill="#18c8e8"/><path d="M1 13h12L7 7z" fill="#0a0a0a"/><rect x=".5" y=".5" width="13" height="13" fill="none" stroke="#e8e8e8"/></svg>
<div class="a" style="left:1672px;top:816.2px;width:233px;height:1.3px;background:#3c3c3c"></div>
<div class="a" style="left:1690px;top:797px;width:15px;height:15px;background:#55b4c9;border:1.5px solid #080808"></div>
<div class="t" style="left:1708px;top:802px;font-size:11px;color:#e2e2e2;transform:scaleX(.96);transform-origin:0 0">C=70 M=0 Y=20 K=0</div>
<svg style="left:1866px;top:798.7px" width="14" height="14"><rect x=".5" y=".5" width="13" height="13" fill="#5e5e5e" stroke="#e4e4e4"/><path d="M2 2.5h10M2 4.5h10M2 6.5h10M2 8.5h10M2 10.5h10" stroke="#8e8e8e" stroke-width="1" stroke-dasharray="1 1"/><path d="M3 3.5h9M3 5.5h9M3 7.5h9M3 9.5h9M3 11.5h9" stroke="#8e8e8e" stroke-width="1" stroke-dasharray="1 1"/></svg>
<svg style="left:1885px;top:798.7px" width="14" height="14"><rect width="14" height="14" fill="#111"/><path d="M1 1h12L7 7z" fill="#e030d8"/><path d="M13 1v12L7 7z" fill="#f2e818"/><path d="M1 1v12L7 7z" fill="#18c8e8"/><path d="M1 13h12L7 7z" fill="#0a0a0a"/><rect x=".5" y=".5" width="13" height="13" fill="none" stroke="#e8e8e8"/></svg>
<div class="a" style="left:1672px;top:840.2px;width:233px;height:1.3px;background:#3c3c3c"></div>
<div class="a" style="left:1690px;top:821px;width:15px;height:15px;background:#2793b0;border:1.5px solid #080808"></div>
<div class="t" style="left:1708px;top:826px;font-size:11px;color:#e2e2e2;transform:scaleX(.96);transform-origin:0 0">C=80 M=10 Y=20 K=10</div>
<svg style="left:1866px;top:822.7px" width="14" height="14"><rect x=".5" y=".5" width="13" height="13" fill="#5e5e5e" stroke="#e4e4e4"/><path d="M2 2.5h10M2 4.5h10M2 6.5h10M2 8.5h10M2 10.5h10" stroke="#8e8e8e" stroke-width="1" stroke-dasharray="1 1"/><path d="M3 3.5h9M3 5.5h9M3 7.5h9M3 9.5h9M3 11.5h9" stroke="#8e8e8e" stroke-width="1" stroke-dasharray="1 1"/></svg>
<svg style="left:1885px;top:822.7px" width="14" height="14"><rect width="14" height="14" fill="#111"/><path d="M1 1h12L7 7z" fill="#e030d8"/><path d="M13 1v12L7 7z" fill="#f2e818"/><path d="M1 1v12L7 7z" fill="#18c8e8"/><path d="M1 13h12L7 7z" fill="#0a0a0a"/><rect x=".5" y=".5" width="13" height="13" fill="none" stroke="#e8e8e8"/></svg>
<div class="a" style="left:1672px;top:864.2px;width:233px;height:1.3px;background:#3c3c3c"></div>
<div class="a" style="left:1690px;top:845px;width:15px;height:15px;background:#3d84a8;border:1.5px solid #080808"></div>
<div class="t" style="left:1708px;top:850px;font-size:11px;color:#e2e2e2;transform:scaleX(.96);transform-origin:0 0">C=80 M=30 Y=20 K=5</div>
<svg style="left:1866px;top:846.7px" width="14" height="14"><rect x=".5" y=".5" width="13" height="13" fill="#5e5e5e" stroke="#e4e4e4"/><path d="M2 2.5h10M2 4.5h10M2 6.5h10M2 8.5h10M2 10.5h10" stroke="#8e8e8e" stroke-width="1" stroke-dasharray="1 1"/><path d="M3 3.5h9M3 5.5h9M3 7.5h9M3 9.5h9M3 11.5h9" stroke="#8e8e8e" stroke-width="1" stroke-dasharray="1 1"/></svg>
<svg style="left:1885px;top:846.7px" width="14" height="14"><rect width="14" height="14" fill="#111"/><path d="M1 1h12L7 7z" fill="#e030d8"/><path d="M13 1v12L7 7z" fill="#f2e818"/><path d="M1 1v12L7 7z" fill="#18c8e8"/><path d="M1 13h12L7 7z" fill="#0a0a0a"/><rect x=".5" y=".5" width="13" height="13" fill="none" stroke="#e8e8e8"/></svg>
<div class="a" style="left:1672px;top:888.2px;width:233px;height:1.3px;background:#3c3c3c"></div>
<div class="a" style="left:1690px;top:869px;width:15px;height:15px;background:#2a6fa6;border:1.5px solid #080808"></div>
<div class="t" style="left:1708px;top:874px;font-size:11px;color:#e2e2e2;transform:scaleX(.96);transform-origin:0 0">C=85 M=35 Y=10 K=15</div>
<svg style="left:1866px;top:870.7px" width="14" height="14"><rect x=".5" y=".5" width="13" height="13" fill="#5e5e5e" stroke="#e4e4e4"/><path d="M2 2.5h10M2 4.5h10M2 6.5h10M2 8.5h10M2 10.5h10" stroke="#8e8e8e" stroke-width="1" stroke-dasharray="1 1"/><path d="M3 3.5h9M3 5.5h9M3 7.5h9M3 9.5h9M3 11.5h9" stroke="#8e8e8e" stroke-width="1" stroke-dasharray="1 1"/></svg>
<svg style="left:1885px;top:870.7px" width="14" height="14"><rect width="14" height="14" fill="#111"/><path d="M1 1h12L7 7z" fill="#e030d8"/><path d="M13 1v12L7 7z" fill="#f2e818"/><path d="M1 1v12L7 7z" fill="#18c8e8"/><path d="M1 13h12L7 7z" fill="#0a0a0a"/><rect x=".5" y=".5" width="13" height="13" fill="none" stroke="#e8e8e8"/></svg>
<div class="a" style="left:1672px;top:912.2px;width:233px;height:1.3px;background:#3c3c3c"></div>
<div class="a" style="left:1690px;top:893px;width:15px;height:15px;background:#e8721c;border:1.5px solid #080808"></div>
<div class="t" style="left:1708px;top:898px;font-size:11px;color:#e2e2e2;transform:scaleX(.96);transform-origin:0 0">C=0 M=70 Y=100 K=0</div>
<svg style="left:1866px;top:894.7px" width="14" height="14"><rect x=".5" y=".5" width="13" height="13" fill="#5e5e5e" stroke="#e4e4e4"/><path d="M2 2.5h10M2 4.5h10M2 6.5h10M2 8.5h10M2 10.5h10" stroke="#8e8e8e" stroke-width="1" stroke-dasharray="1 1"/><path d="M3 3.5h9M3 5.5h9M3 7.5h9M3 9.5h9M3 11.5h9" stroke="#8e8e8e" stroke-width="1" stroke-dasharray="1 1"/></svg>
<svg style="left:1885px;top:894.7px" width="14" height="14"><rect width="14" height="14" fill="#111"/><path d="M1 1h12L7 7z" fill="#e030d8"/><path d="M13 1v12L7 7z" fill="#f2e818"/><path d="M1 1v12L7 7z" fill="#18c8e8"/><path d="M1 13h12L7 7z" fill="#0a0a0a"/><rect x=".5" y=".5" width="13" height="13" fill="none" stroke="#e8e8e8"/></svg>
<div class="red" style="left:1666.2px;top:788.3px;width:241.2px;height:103.3px;border-width:5.3px"></div>
<div class="a" style="left:1672px;top:938px;width:248px;height:23px;background:#535353;border-top:1px solid #5e5e5e"></div>
<svg style="left:1765px;top:944px" width="20" height="14"><rect x=".5" y=".5" width="12" height="12" fill="#ddd"/><rect x="1.5" y="1.5" width="2.7" height="2.7" fill="#777"/><rect x="5.2" y="1.5" width="2.7" height="2.7" fill="#222"/><rect x="8.9" y="1.5" width="2.7" height="2.7" fill="#777"/><rect x="1.5" y="5.2" width="2.7" height="2.7" fill="#222"/><rect x="5.2" y="5.2" width="2.7" height="2.7" fill="#777"/><rect x="8.9" y="5.2" width="2.7" height="2.7" fill="#222"/><rect x="1.5" y="8.9" width="2.7" height="2.7" fill="#777"/><rect x="5.2" y="8.9" width="2.7" height="2.7" fill="#222"/><rect x="8.9" y="8.9" width="2.7" height="2.7" fill="#777"/><path d="M14 10.5h4.5l-2.2 2.5z" fill="#ddd"/></svg>
<svg style="left:1803px;top:944px" width="16" height="13"><path d="M.5 2.5a1 1 0 0 1 1-1h4.5l1.5 2h7a1 1 0 0 1 1 1v7.5a1 1 0 0 1-1 1h-13a1 1 0 0 1-1-1z" fill="#d8d8d8"/></svg>
<svg style="left:1840px;top:944px" width="14" height="13"><path d="M1 .5h12.5v12.5H5.5L1 8z" fill="#dcdcdc"/><path d="M1 8h4.5v5" fill="#535353"/><path d="M1.5 8h4v4.5z" fill="#8c8c8c"/></svg>
<svg style="left:1875.5px;top:943.5px" width="14" height="14" opacity="0.35"><path d="M4.5 1.5h5" stroke="#dcdcdc" stroke-width="1.6"/><path d="M.5 3.5h13" stroke="#dcdcdc" stroke-width="1.6"/><path d="M1.8 5.5h10.4l-1 8H2.8z" fill="#dcdcdc"/><path d="M4.8 6.5v6M7 6.5v6M9.2 6.5v6" stroke="#535353" stroke-width="1"/></svg>
<div class="a" style="left:1672px;top:961px;width:248px;height:4.5px;background:#2f2f2f"></div>
<div class="a" style="left:1672px;top:965.5px;width:248px;height:20px;background:#404040"></div>
<div class="a" style="left:1723px;top:965.5px;width:82px;height:20px;background:#535353;border-top:1px solid #636363"></div>
<div class="t" style="left:1680px;top:969.5px;font-size:12px;font-weight:bold;color:#aaaaaa">Effekte</div>
<svg style="left:1727.5px;top:970px" width="7" height="11"><path d="M.8 4L3.5 1l2.7 3M.8 7L3.5 10l2.7-3" fill="none" stroke="#e8e8e8" stroke-width="1.3"/></svg>
<div class="t" style="left:1737px;top:969.5px;font-size:12px;font-weight:bold;color:#ececec">Ausrichten</div>
<div class="t" style="left:1813.5px;top:969.5px;font-size:12px;font-weight:bold;color:#aaaaaa">Pathfinder</div>
<svg style="left:1898px;top:971px" width="16" height="9"><path d="M0 1.5h5L2.5 4.5z" fill="#d8d8d8"/><path d="M6.5 .5H16M6.5 3H16M6.5 5.5H16M6.5 8H16" stroke="#d0d0d0" stroke-width="1.1"/></svg>
<div class="a" style="left:1672px;top:985.5px;width:248px;height:3.5px;background:#2f2f2f"></div>
<div class="a" style="left:1672px;top:989px;width:248px;height:21.5px;background:#404040"></div>
<div class="a" style="left:1702px;top:989px;width:111px;height:21.5px;background:#535353;border-top:1px solid #636363"></div>
<div class="a" style="left:1680px;top:990px;width:21px;height:20px;overflow:hidden"><div class="t" style="left:0;top:4px;font-size:12px;font-weight:bold;color:#aaaaaa">Zeichen</div></div>
<svg style="left:1706px;top:994.5px" width="7" height="11"><path d="M.8 4L3.5 1l2.7 3M.8 7L3.5 10l2.7-3" fill="none" stroke="#e8e8e8" stroke-width="1.3"/></svg>
<div class="t" style="left:1715.5px;top:994px;font-size:12px;font-weight:bold;color:#ececec">Zeichenformate</div>
<div class="t" style="left:1821.5px;top:994px;font-size:12px;font-weight:bold;color:#aaaaaa">Abs</div>
<div class="a" style="left:1851px;top:990px;width:20.5px;height:20px;overflow:hidden"><div class="t" style="left:0;top:4px;font-size:12px;font-weight:bold;color:#aaaaaa">Text</div></div>
<svg style="left:1898px;top:996px" width="16" height="9"><path d="M0 1.5h5L2.5 4.5z" fill="#d8d8d8"/><path d="M6.5 .5H16M6.5 3H16M6.5 5.5H16M6.5 8H16" stroke="#d0d0d0" stroke-width="1.1"/></svg>
<div class="a" style="left:1672px;top:1010.5px;width:248px;height:20px;background:#3a3a3a"></div>
</body></html>
